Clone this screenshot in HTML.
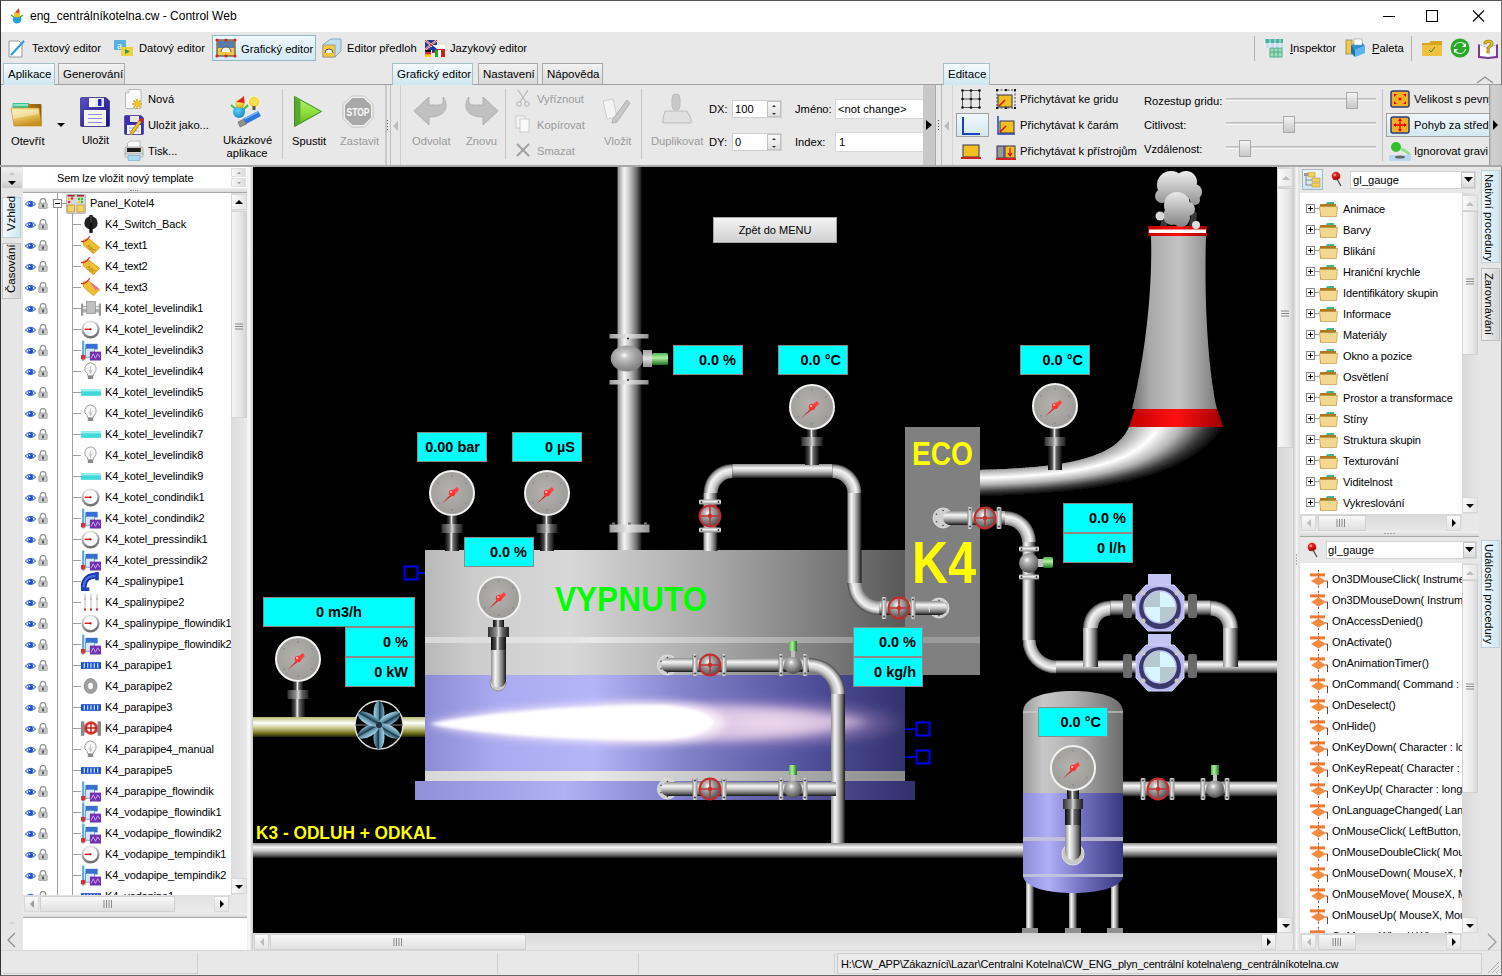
<!DOCTYPE html>
<html><head><meta charset="utf-8">
<style>
*{margin:0;padding:0;box-sizing:border-box}
html,body{width:1502px;height:976px;overflow:hidden;background:#e8e8e8;font-family:"Liberation Sans",sans-serif;font-size:11.2px;color:#000}
.a{position:absolute}
.t{position:absolute;white-space:nowrap;line-height:14px}
.g{color:#9a9a9a}
.tab{position:absolute;white-space:nowrap;border:1px solid #a8a8a8;border-bottom:none;background:linear-gradient(#f2f2f2,#d8d8d8);height:21px;line-height:21px;padding:0 4px;font-size:11.5px;overflow:hidden}
.tab.on{background:linear-gradient(#f4fbfd,#cfe7f0);border-color:#a8c0c8;height:22px}
.vs{position:absolute;background:linear-gradient(90deg,#e4e4e4,#f4f4f4 50%,#e0e0e0)}
.hs{position:absolute;background:linear-gradient(#e4e4e4,#f4f4f4 50%,#e0e0e0)}
.btn{position:absolute;background:linear-gradient(#fbfbfb,#e2e2e2);border:1px solid #bdbdbd}
.cy{position:absolute;background:#00ffff;border:1px solid #8c8c8c;font-weight:bold;font-size:14px;text-align:right;padding-right:6px;line-height:27px;color:#000;font-family:"Liberation Sans",sans-serif}
.n{font-size:11px;letter-spacing:-0.1px}
.row{position:absolute;height:21px;line-height:21px;white-space:nowrap}
</style></head><body>

<svg width="0" height="0" style="position:absolute">
<defs>
<symbol id="eye" viewBox="0 0 11 8"><ellipse cx="5.5" cy="4" rx="5.3" ry="3.3" fill="#dfe8f8"/><path d="M0.3 4 Q5.5 -1.5 10.7 4 Q5.5 9 0.3 4Z" fill="none" stroke="#2a50b8" stroke-width="0.9"/><circle cx="5.5" cy="4" r="2.5" fill="#2050c8"/><circle cx="4.6" cy="3.2" r="0.8" fill="#fff"/></symbol>
<symbol id="lock" viewBox="0 0 10 11"><path d="M2.2 5 V3.3 A2.8 2.8 0 0 1 7.8 3.3 V5" fill="none" stroke="#9a9a9a" stroke-width="1.3"/><rect x="0.8" y="5" width="8.4" height="5.6" rx="0.6" fill="#c8c8c8" stroke="#8a8a8a" stroke-width="0.6"/><rect x="4.3" y="6.4" width="1.4" height="3" fill="#333"/></symbol>
<symbol id="i_switch" viewBox="0 0 14 18"><circle cx="7" cy="8" r="6" fill="#222"/><path d="M5.5 1 L8.5 1 L8.5 17 L5.5 17Z" fill="#111"/><path d="M7 2 V8" stroke="#aa8" stroke-width="0.5"/></symbol>
<symbol id="i_tag" viewBox="0 0 16 16"><path d="M6 3 L15 10 L10 15 L2 8 L2 4Z" fill="#f0c030" stroke="#d09010" stroke-width="0.6"/><path d="M0 5 C3 6 5 4 7 1" stroke="#e02020" fill="none" stroke-width="1"/><text x="5" y="11" font-size="4" fill="#a07010" transform="rotate(40 7 9)" font-family="Liberation Sans">ABC</text></symbol>
<symbol id="i_tag3" viewBox="0 0 16 16"><path d="M6 3 L15 10 L10 15 L2 8 L2 4Z" fill="#f0c030" stroke="#d09010" stroke-width="0.6"/><path d="M7 4 L14 9 L12 11Z" fill="#e070a0"/><path d="M0 5 C3 6 5 4 7 1" stroke="#e02020" fill="none" stroke-width="1"/></symbol>
<symbol id="i_meter" viewBox="0 0 18 14"><rect x="0" y="5" width="18" height="6" fill="#b0b0b0"/><rect x="0" y="6" width="18" height="2" fill="#e8e8e8"/><rect x="5" y="1" width="8" height="11" fill="#c0c0c0" stroke="#888" stroke-width="0.6"/><rect x="0" y="3" width="2" height="11" fill="#999"/><rect x="16" y="3" width="2" height="11" fill="#999"/></symbol>
<symbol id="i_gauge" viewBox="0 0 18 18"><defs><linearGradient id="gic" x1="0" y1="0" x2="0.3" y2="1"><stop offset="0" stop-color="#f8f8f8"/><stop offset="1" stop-color="#707070"/></linearGradient></defs><circle cx="9" cy="9" r="8.6" fill="url(#gic)"/><circle cx="9" cy="8.6" r="6.6" fill="#fbfbfb"/><path d="M3.5 8.8 H9" stroke="#e02020" stroke-width="1.3"/><circle cx="9" cy="8.8" r="1.1" fill="#c01010"/></symbol>
<symbol id="i_disp" viewBox="0 0 18 18"><rect x="1" y="0" width="2" height="18" fill="#60a8e0"/><rect x="0" y="13" width="4" height="4" fill="#e03030"/><rect x="4" y="3" width="11" height="5" fill="#3870d0"/><rect x="4" y="7" width="8" height="8" fill="#d8e8f8" stroke="#3a78c8" stroke-width="0.6"/><rect x="8" y="10" width="10" height="8" fill="#7030b0"/><path d="M9 16 L11 12 L13 16 L15 12 L17 15" stroke="#d8b0f8" fill="none" stroke-width="0.8"/></symbol>
<symbol id="i_bulb" viewBox="0 0 14 18"><path d="M7 1 A5.5 5.5 0 0 1 10 11 L9.5 13 L4.5 13 L4 11 A5.5 5.5 0 0 1 7 1Z" fill="#f8f8f8" stroke="#888" stroke-width="0.7"/><rect x="4.5" y="13" width="5" height="3" fill="#888"/><path d="M7 4 V11 M5.5 7 L7 11 L8.5 7" stroke="#aaa" stroke-width="0.5" fill="none"/></symbol>
<symbol id="i_cyan" viewBox="0 0 18 8"><rect x="0" y="1" width="18" height="6" fill="#40d8d8"/><rect x="0" y="1" width="18" height="2" fill="#a0f0f0"/></symbol>
<symbol id="i_bend" viewBox="0 0 16 16"><path d="M2 15 C2 6 6 3 14 3" stroke="#1830b0" stroke-width="5" fill="none"/><path d="M2 15 C2 6 6 3 14 3" stroke="#4a70e0" stroke-width="2" fill="none"/><rect x="12" y="0" width="3" height="7" fill="#2040c0"/><rect x="0" y="13" width="7" height="3" fill="#2040c0"/></symbol>
<symbol id="i_pipes" viewBox="0 0 18 18"><path d="M3 1 V17 M9 1 V17 M15 1 V17" stroke="#ddd" stroke-width="2"/><path d="M3 15 V17 M9 15 V17 M15 15 V17" stroke="#e02020" stroke-width="2"/><path d="M3 5 V6 M9 5 V6 M15 5 V6" stroke="#e02020" stroke-width="1"/></symbol>
<symbol id="i_bar" viewBox="0 0 18 8"><rect x="0" y="1" width="18" height="6" fill="#1a50d0"/><path d="M3 2 V6 M6 2 V6 M9 2 V6 M12 2 V6 M15 2 V6" stroke="#c8e0ff" stroke-width="1.2"/></symbol>
<symbol id="i_disc" viewBox="0 0 16 18"><ellipse cx="8" cy="9" rx="7" ry="8" fill="#a0a0a0" stroke="#777" stroke-width="0.6"/><ellipse cx="8" cy="9" rx="2.5" ry="3.5" fill="#fff"/></symbol>
<symbol id="i_valve" viewBox="0 0 18 16"><rect x="0" y="5" width="18" height="7" fill="#999"/><rect x="0" y="2" width="3" height="13" fill="#888"/><rect x="15" y="2" width="3" height="13" fill="#888"/><circle cx="9" cy="8" r="6" fill="#e03030"/><circle cx="9" cy="8" r="3.5" fill="#eee"/><path d="M9 3 V13 M4 8 H14" stroke="#c02020" stroke-width="1.2"/></symbol>
<symbol id="i_panel" viewBox="0 0 20 20"><rect x="0.5" y="0.5" width="19" height="19" rx="1" fill="#d8d8d8" stroke="#999" stroke-width="0.6"/><rect x="1.5" y="1" width="7" height="1.5" fill="#a02020"/><rect x="11" y="1" width="7" height="1.5" fill="#a02020"/><circle cx="3" cy="5" r="1.2" fill="#e8d020"/><circle cx="6" cy="4.5" r="1.2" fill="#e02020"/><circle cx="3" cy="8" r="1.2" fill="#e02020"/><circle cx="13" cy="5" r="1.2" fill="#30c030"/><circle cx="16" cy="5" r="1.2" fill="#30c030"/><circle cx="16" cy="8" r="1.2" fill="#30c030"/><circle cx="13" cy="8" r="1.2" fill="#e8d020"/><rect x="1.5" y="11" width="7" height="7" fill="#f0d860" stroke="#c08030" stroke-width="0.6"/><rect x="11" y="11" width="7" height="7" fill="#f0d860" stroke="#c08030" stroke-width="0.6"/></symbol>
<symbol id="folder" viewBox="0 0 20 16"><path d="M1 3 L7 3 L8 1 L15 1 L15 4 L1 4Z" fill="#40b888"/><path d="M1 3 H17 V15 H1Z" fill="#b07820"/><path d="M0.5 5.5 H18.5 L17.5 15.5 H1.5Z" fill="#f2d890" stroke="#b88a30" stroke-width="0.6"/></symbol>
<symbol id="evt" viewBox="0 0 18 18"><path d="M8.5 0 V18" stroke="#6a2a10" stroke-width="0.9" stroke-dasharray="1.6 1.1"/><rect x="0" y="3.4" width="15" height="3" fill="#f07830"/><path d="M8.5 6.5 L16 11 L8.5 15.5 L1 11Z" fill="#f88a40"/><path d="M15.5 11 H17.5 V18" stroke="#6a2a10" stroke-width="0.9" fill="none"/></symbol>
<symbol id="pin" viewBox="0 0 12 16"><circle cx="5" cy="5" r="4.3" fill="#e02020"/><circle cx="3.8" cy="3.8" r="1.4" fill="#ff9090"/><path d="M6 8 L10 15" stroke="#444" stroke-width="1.2"/><path d="M2 8 L9 6" stroke="#b01010" stroke-width="2"/></symbol>
</defs></svg>
<!-- TITLE BAR -->
<div class="a" style="left:0;top:0;width:1502px;height:32px;background:#fff;border-left:1px solid #333;border-top:1px solid #555;border-right:1px solid #777"></div>

<svg class="a" style="left:10px;top:7px" width="14" height="17" viewBox="0 0 14 17"><path d="M1 8 L5 11 M13 8 L9 11" stroke="#40b030" stroke-width="1.4"/><ellipse cx="7" cy="12.5" rx="4.3" ry="4" fill="#28a0e0"/><circle cx="7" cy="7.5" r="3" fill="#f0c020"/><path d="M5 5.5 L9 1 L9.5 6Z" fill="#e83030"/></svg>
<div class="t" style="left:30px;top:9px;font-size:12px">eng_centrálníkotelna.cw - Control Web</div>
<svg class="a" style="left:1383px;top:9px" width="110" height="14" viewBox="0 0 110 14"><path d="M0 7.5H12" stroke="#000" stroke-width="1"/><rect x="43.5" y="1.5" width="11" height="11" fill="none" stroke="#000"/><path d="M90 1.5L101 12.5M101 1.5L90 12.5" stroke="#000" stroke-width="1.1"/></svg>

<!-- TOOLBAR -->

<div class="a" style="left:0;top:32px;width:1502px;height:944px;border-left:1px solid #333;border-right:1px solid #777;border-bottom:1px solid #666"></div>
<!-- Textovy editor -->
<svg class="a" style="left:7px;top:38px" width="20" height="20" viewBox="0 0 20 20"><path d="M2 3 L12 3 L15 6 L15 19 L2 19Z" fill="#fafafa" stroke="#999" stroke-width="1"/><path d="M4 17 L17 3" stroke="#2d9ad8" stroke-width="2"/></svg>
<div class="t" style="left:32px;top:41px">Textový editor</div>
<svg class="a" style="left:113px;top:38px" width="22" height="20" viewBox="0 0 22 20"><rect x="1" y="2" width="12" height="10" fill="#5ab0e0"/><text x="4" y="11" font-size="9" fill="#fff" font-family="Liberation Sans">a</text><rect x="8" y="9" width="12" height="9" fill="#f0d040"/><path d="M12 11 L17 13.5 L12 16Z" fill="#2a9a50"/></svg>
<div class="t" style="left:139px;top:41px">Datový editor</div>
<div class="a" style="left:212px;top:35px;width:104px;height:26px;background:linear-gradient(#eef8fc,#d5eaf3);border:1px solid #95b7c5"></div>
<svg class="a" style="left:215px;top:38px" width="22" height="20" viewBox="0 0 22 20"><rect x="2" y="2" width="18" height="16" fill="#f5c842" stroke="#333" stroke-width="1"/><rect x="3" y="3" width="16" height="7" fill="#5a7aa8"/><path d="M6 14 A5 5 0 0 1 16 14" fill="#fff" stroke="#555"/><circle cx="2" cy="2" r="1.6" fill="#e02020"/><circle cx="20" cy="2" r="1.6" fill="#e02020"/><circle cx="2" cy="18" r="1.6" fill="#e02020"/><circle cx="20" cy="18" r="1.6" fill="#e02020"/><circle cx="11" cy="2" r="1.6" fill="#e02020"/><circle cx="11" cy="18" r="1.6" fill="#e02020"/></svg>
<div class="t" style="left:241px;top:42px">Grafický editor</div>
<svg class="a" style="left:321px;top:37px" width="22" height="22" viewBox="0 0 22 22"><path d="M4 6 L10 2 L20 2 L20 14 L14 20 L2 20 L2 8Z" fill="#bfe0f0" stroke="#8ab" stroke-width="1"/><rect x="2" y="8" width="12" height="12" fill="#f5c842" stroke="#a98"/><path d="M4 16 A4 4 0 0 1 12 16" fill="#fff" stroke="#555"/></svg>
<div class="t" style="left:347px;top:41px">Editor předloh</div>
<svg class="a" style="left:424px;top:39px" width="22" height="18" viewBox="0 0 22 18"><rect x="1" y="1" width="12" height="10" fill="#2a3a8a"/><path d="M1 1L13 11M13 1L1 11" stroke="#fff" stroke-width="2"/><path d="M1 1L13 11M13 1L1 11" stroke="#d22" stroke-width="1"/><rect x="1" y="11" width="6" height="2.3" fill="#000"/><rect x="1" y="13.3" width="6" height="2.3" fill="#d22"/><rect x="1" y="15.6" width="6" height="2.3" fill="#fc0"/><rect x="8" y="6" width="13" height="4" fill="#fff"/><rect x="8" y="10" width="13" height="4" fill="#d22"/><path d="M8 6 L13 10 L8 14Z" fill="#13a"/><rect x="14" y="11" width="3" height="7" fill="#fff"/><rect x="17" y="11" width="4" height="7" fill="#c22"/><rect x="11" y="11" width="3" height="7" fill="#2a2"/></svg>
<div class="t" style="left:450px;top:41px">Jazykový editor</div>
<div class="a" style="left:1254px;top:36px;width:1px;height:25px;background:#b0b0b0"></div>
<svg class="a" style="left:1264px;top:38px" width="20" height="20" viewBox="0 0 20 20"><rect x="1" y="1" width="18" height="4" fill="#4ab0a0"/><rect x="1" y="5" width="18" height="5" fill="#cde"/><rect x="6" y="10" width="12" height="9" fill="#9de0b0" stroke="#5a9" stroke-width="1"/><path d="M6 14H18M10 10V19M14 10V19" stroke="#5a9"/><path d="M1 1V10M6 1V10M11 1V10M16 1V10" stroke="#fff" stroke-width="0.7"/></svg>
<div class="t" style="left:1290px;top:41px"><u>I</u>nspektor</div>
<svg class="a" style="left:1345px;top:37px" width="22" height="22" viewBox="0 0 22 22"><rect x="1" y="3" width="6" height="14" fill="#f5c842" stroke="#886" stroke-width="0.8"/><path d="M6 8 L16 4 L20 9 L10 13Z" fill="#2f8fd0"/><path d="M6 8 L10 13 L10 20 L6 16Z" fill="#1a70b0"/><path d="M10 13 L20 9 L20 16 L10 20Z" fill="#5ab5e8"/><rect x="9" y="2" width="8" height="6" fill="#fff" stroke="#999" stroke-width="0.6"/></svg>
<div class="t" style="left:1372px;top:41px"><u>P</u>aleta</div>
<div class="a" style="left:1411px;top:36px;width:1px;height:25px;background:#b0b0b0"></div>
<svg class="a" style="left:1421px;top:38px" width="22" height="20" viewBox="0 0 22 20"><path d="M1 5 L8 5 L10 3 L21 3 L21 18 L1 18Z" fill="#d9a520"/><rect x="1" y="7" width="20" height="11" fill="#f0c040"/><path d="M8 12 L10 14 L14 9" stroke="#2a8a30" stroke-width="1" fill="none"/></svg>
<svg class="a" style="left:1450px;top:38px" width="20" height="20" viewBox="0 0 20 20"><circle cx="10" cy="10" r="9.5" fill="#29a829"/><path d="M5 9 A5 5 0 0 1 14 7 L12 9 L16 9 L16 5 L15 6 A6.5 6.5 0 0 0 4 9Z M15 11 A5 5 0 0 1 6 13 L8 11 L4 11 L4 15 L5 14 A6.5 6.5 0 0 0 16 11Z" fill="#fff"/></svg>
<svg class="a" style="left:1477px;top:36px" width="22" height="24" viewBox="0 0 22 24"><path d="M1 8 L11 12 L21 8 L21 22 L11 23 L1 22Z" fill="#7a3a98"/><path d="M3 9 L11 12 L11 21 L3 20Z" fill="#fff"/><path d="M11 12 L19 9 L19 20 L11 21Z" fill="#f4f4f4"/><text x="6" y="17" font-size="18" font-weight="bold" fill="#f0c010" stroke="#8a6a00" stroke-width="0.6" font-family="Liberation Sans">?</text></svg>

<!-- RIBBON -->

<!-- tabs -->
<div class="a" style="left:1px;top:84px;width:1500px;height:1px;background:#a0a0a0"></div>
<div class="tab on" style="left:3px;top:63px;width:52px">Aplikace</div>
<div class="tab" style="left:58px;top:63px;width:67px">Generování</div>
<div class="tab on" style="left:392px;top:63px;width:81px">Grafický editor</div>
<div class="tab" style="left:478px;top:63px;width:60px">Nastavení</div>
<div class="tab" style="left:542px;top:63px;width:61px">Nápověda</div>
<div class="tab on" style="left:943px;top:63px;width:47px">Editace</div>
<svg class="a" style="left:1476px;top:76px" width="18" height="8" viewBox="0 0 18 8"><path d="M1 7 L9 1 L17 7" stroke="#909090" fill="none" stroke-width="1.2"/></svg>
<!-- ribbon separators -->
<div class="a" style="left:385px;top:85px;width:2px;height:80px;background:#c8c8c8"></div>
<div class="a" style="left:390px;top:85px;width:1px;height:80px;background:#bdbdbd"></div>
<div class="a" style="left:400px;top:85px;width:1px;height:80px;background:#d0d0d0"></div>
<div class="a" style="left:282px;top:89px;width:1px;height:70px;background:#c4c4c4"></div>
<div class="a" style="left:505px;top:89px;width:1px;height:70px;background:#c4c4c4"></div>
<div class="a" style="left:641px;top:89px;width:1px;height:70px;background:#c4c4c4"></div>
<div class="a" style="left:923px;top:85px;width:12px;height:80px;background:#c8c8c8"></div>
<div class="a" style="left:935px;top:85px;width:1px;height:80px;background:#a8a8a8"></div>
<div class="a" style="left:941px;top:85px;width:1px;height:80px;background:#b8b8b8"></div>
<div class="a" style="left:952px;top:85px;width:1px;height:80px;background:#d4d4d4"></div>
<svg class="a" style="left:925px;top:120px" width="8" height="10"><path d="M1 0 L7 5 L1 10Z" fill="#000"/></svg>
<svg class="a" style="left:393px;top:121px" width="6" height="10"><path d="M5 0 L0 5 L5 10Z" fill="#bbb"/></svg>
<svg class="a" style="left:386px;top:119px" width="3" height="14"><path d="M1 1.5H2M1 4.5H2M1 7.5H2M1 10.5H2" stroke="#555"/></svg>
<svg class="a" style="left:937px;top:119px" width="3" height="14"><path d="M1 1.5H2M1 4.5H2M1 7.5H2M1 10.5H2" stroke="#555"/></svg>
<svg class="a" style="left:944px;top:121px" width="6" height="10"><path d="M5 0 L0 5 L5 10Z" fill="#bbb"/></svg>
<div class="a" style="left:0;top:165px;width:1502px;height:2px;background:#a8a8a8"></div>

<!-- Otevrit -->
<svg class="a" style="left:10px;top:102px" width="33" height="26" viewBox="0 0 33 26"><defs><linearGradient id="fldF" x1="0" y1="0" x2="0.4" y2="1"><stop offset="0" stop-color="#fbeeb0"/><stop offset="0.45" stop-color="#f0d070"/><stop offset="1" stop-color="#c89020"/></linearGradient><linearGradient id="fldB" x1="0" y1="0" x2="1" y2="0"><stop offset="0" stop-color="#b07818"/><stop offset="1" stop-color="#8a5a10"/></linearGradient></defs><rect x="2.5" y="1" width="17" height="6" rx="1" fill="#3cc090"/><rect x="3.5" y="2" width="15" height="2" fill="#8ee0c0"/><rect x="18" y="2" width="13.5" height="22" rx="1" fill="url(#fldB)"/><path d="M1 6 L29 6 L31.5 24 L4 24Z" fill="url(#fldF)" stroke="#c08a20" stroke-width="0.6"/><path d="M2 8 L28 8 L29 12 L3 17Z" fill="#fff" opacity="0.35"/></svg>
<svg class="a" style="left:57px;top:123px" width="8" height="5"><path d="M0 0 L8 0 L4 4Z" fill="#000"/></svg>
<div class="t" style="left:11px;top:134px">Otevřít</div>
<svg class="a" style="left:80px;top:97px" width="30" height="30" viewBox="0 0 30 30"><defs><linearGradient id="flp" x1="0" y1="0" x2="1" y2="1"><stop offset="0" stop-color="#5a50c8"/><stop offset="0.5" stop-color="#3a30a8"/><stop offset="1" stop-color="#14108a"/></linearGradient></defs><path d="M0.5 1.5 Q0.5 0.5 1.5 0.5 L26 0.5 L29.5 4 L29.5 28.5 Q29.5 29.5 28.5 29.5 L1.5 29.5 Q0.5 29.5 0.5 28.5Z" fill="url(#flp)" stroke="#201870" stroke-width="0.6"/><rect x="9" y="1" width="15" height="9" fill="#e8e8e8"/><rect x="9" y="1" width="6" height="9" fill="#f8f8f8"/><rect x="18" y="2" width="3.5" height="7" rx="1" fill="#2020d0"/><rect x="4" y="13" width="22" height="16" fill="#f4f4f4"/><path d="M8 17.5H22M8 21.5H22M8 25.5H22" stroke="#9090e0" stroke-width="1"/></svg>
<div class="t n" style="left:82px;top:133px">Uložit</div>
<svg class="a" style="left:124px;top:88px" width="20" height="22" viewBox="0 0 20 22"><path d="M5 1.5 L16 1.5 Q17 1.5 17 2.5 L17 19.5 Q17 20.5 16 20.5 L2.5 20.5 Q1.5 20.5 1.5 19.5 L1.5 5Z" fill="#fafafa" stroke="#a8a8a8" stroke-width="0.8"/><path d="M1.5 5 L5 5 L5 1.5" fill="#e8e8e8" stroke="#a8a8a8" stroke-width="0.6"/><g stroke="#d8a800" stroke-width="1.4"><path d="M13 11 V21 M8 16 H18 M9.5 12.5 L16.5 19.5 M16.5 12.5 L9.5 19.5"/></g><circle cx="13" cy="16" r="2" fill="#f8d020"/></svg>
<div class="t" style="left:148px;top:92px">Nová</div>
<svg class="a" style="left:124px;top:115px" width="20" height="20" viewBox="0 0 20 20"><path d="M0.5 1.5 Q0.5 0.5 1.5 0.5 L17 0.5 L19.5 3 L19.5 18.5 Q19.5 19.5 18.5 19.5 L1.5 19.5 Q0.5 19.5 0.5 18.5Z" fill="#3a30b0" stroke="#201870" stroke-width="0.5"/><rect x="6" y="1" width="9" height="6" fill="#e8e8e8"/><rect x="3" y="10" width="14" height="9" fill="#f4f4f4"/><path d="M5 13H15M5 16H15" stroke="#9090e0" stroke-width="0.8"/><path d="M7 19 L17 5" stroke="#a07000" stroke-width="3.6"/><path d="M7 19 L17 5" stroke="#f0c020" stroke-width="2.4"/><path d="M16 6.4 L18 3.6" stroke="#e02020" stroke-width="3"/><path d="M6.5 19.5 L7.8 17.5" stroke="#d0a080" stroke-width="1.5"/></svg>
<div class="t" style="left:148px;top:118px">Uložit jako...</div>
<svg class="a" style="left:124px;top:140px" width="20" height="21" viewBox="0 0 20 21"><path d="M6 1 L16 1 L16 8 L3.5 8 L3.5 3.5Z" fill="#f8f8f8" stroke="#999" stroke-width="0.6"/><rect x="1" y="7" width="18" height="8" rx="1.5" fill="#d8d8d8" stroke="#888" stroke-width="0.6"/><rect x="3" y="8" width="14" height="4" fill="#1a1a1a"/><circle cx="16.5" cy="9" r="0.6" fill="#e03030"/><circle cx="16.5" cy="11" r="0.6" fill="#30c030"/><rect x="1" y="14" width="18" height="3" fill="#e8e8e8" stroke="#888" stroke-width="0.5"/><rect x="4" y="15.5" width="12" height="5" fill="#a8dcf0" stroke="#5aa0c0" stroke-width="0.5"/></svg>
<div class="t" style="left:148px;top:144px">Tisk...</div>
<svg class="a" style="left:229px;top:94px" width="34" height="34" viewBox="0 0 34 34"><defs><radialGradient id="ukB" cx="0.4" cy="0.35" r="0.7"><stop offset="0" stop-color="#60d0f8"/><stop offset="1" stop-color="#1888c8"/></radialGradient><radialGradient id="ukY" cx="0.4" cy="0.35" r="0.7"><stop offset="0" stop-color="#fff080"/><stop offset="1" stop-color="#d8a800"/></radialGradient></defs><path d="M2 11 L8 16 M19 11 L14 16" stroke="#40c030" stroke-width="2"/><circle cx="10" cy="18" r="6" fill="url(#ukB)"/><circle cx="11" cy="9.5" r="4.5" fill="url(#ukY)"/><path d="M7.5 8 L15 2 L15.5 9Z" fill="#e82020"/><circle cx="25" cy="8" r="6.5" fill="#fff8a0" opacity="0.6"/><circle cx="25" cy="8" r="4.5" fill="#f8e050" stroke="#e0b000" stroke-width="0.6"/><rect x="23.5" y="12" width="3" height="4" fill="#555"/><path d="M14 25 L29 17 L32 22 L17 30Z" fill="#2878e0"/><path d="M15 24 L28 17.5 L29 19 L16 25.5Z" fill="#70b0f8"/><path d="M9 28 L15 25 L17.5 30 L11 33Z" fill="#909090" stroke="#555" stroke-width="0.5"/></svg>
<div class="t" style="left:223px;top:134px;text-align:center;width:48px;line-height:13px">Ukázkové<br>aplikace</div>
<svg class="a" style="left:293px;top:95px" width="30" height="33" viewBox="0 0 30 33"><defs><linearGradient id="spG" x1="0" y1="0" x2="0" y2="1"><stop offset="0" stop-color="#b8f080"/><stop offset="0.5" stop-color="#90e040"/><stop offset="1" stop-color="#60b020"/></linearGradient></defs><path d="M1.5 1.5 L28.5 16.5 L1.5 31.5Z" fill="url(#spG)" stroke="#3a8a20" stroke-width="1"/><path d="M2 2.5 L7.5 5.5 L7.5 28 L2 31Z" fill="#5aa830"/></svg>
<div class="t" style="left:292px;top:134px">Spustit</div>
<svg class="a" style="left:342px;top:95px" width="32" height="33" viewBox="0 0 32 33"><path d="M9.5 1 L22.5 1 L31 9.5 L31 23.5 L22.5 32 L9.5 32 L1 23.5 L1 9.5Z" fill="#f0f0f0" stroke="#b8b8b8" stroke-width="0.8"/><path d="M10.3 3 L21.7 3 L29 10.3 L29 22.7 L21.7 30 L10.3 30 L3 22.7 L3 10.3Z" fill="#a8a8a8"/><text x="16" y="21" text-anchor="middle" font-size="11" font-weight="bold" fill="#fafafa" font-family="Liberation Sans" textLength="23" lengthAdjust="spacingAndGlyphs">STOP</text></svg>
<div class="t g" style="left:340px;top:134px">Zastavit</div>

<!-- Odvolat etc -->
<svg class="a" style="left:413px;top:95px" width="36" height="32" viewBox="0 0 36 32"><path d="M1 16 L16 2 L16 10 C26 10 32 12 30 2 C36 10 34 22 16 22 L16 30Z" fill="#c0c0c0" stroke="#b0b0b0"/></svg>
<div class="t g" style="left:412px;top:134px">Odvolat</div>
<svg class="a" style="left:463px;top:95px" width="36" height="32" viewBox="0 0 36 32"><path d="M35 16 L20 2 L20 10 C10 10 4 12 6 2 C0 10 2 22 20 22 L20 30Z" fill="#c0c0c0" stroke="#b0b0b0"/></svg>
<div class="t g" style="left:466px;top:134px">Znovu</div>
<svg class="a" style="left:515px;top:89px" width="16" height="18" viewBox="0 0 16 18"><path d="M3 1 L11 13 M13 1 L5 13" stroke="#b8b8b8" stroke-width="1.2"/><circle cx="4" cy="15" r="2.3" fill="none" stroke="#b0b0b0"/><circle cx="12" cy="15" r="2.3" fill="none" stroke="#b0b0b0"/></svg>
<div class="t g" style="left:537px;top:92px">Vyříznout</div>
<svg class="a" style="left:515px;top:115px" width="16" height="18" viewBox="0 0 16 18"><rect x="1" y="1" width="9" height="12" fill="#f4f4f4" stroke="#ccc"/><rect x="5" y="4" width="9" height="13" fill="#fafafa" stroke="#ccc"/></svg>
<div class="t g" style="left:537px;top:118px">Kopírovat</div>
<svg class="a" style="left:515px;top:142px" width="16" height="16" viewBox="0 0 16 16"><path d="M2 2 L14 14 M14 2 L2 14" stroke="#a0a0a0" stroke-width="2"/></svg>
<div class="t g" style="left:537px;top:144px">Smazat</div>
<svg class="a" style="left:601px;top:97px" width="30" height="28" viewBox="0 0 30 28"><path d="M2 4 L12 2 L16 20 L6 22Z" fill="#f4f4f4" stroke="#ccc"/><path d="M12 22 L26 3 L29 6 L16 25 L11 26Z" fill="#c8c8c8" stroke="#b0b0b0"/></svg>
<div class="t g" style="left:604px;top:134px">Vložit</div>
<svg class="a" style="left:659px;top:93px" width="36" height="34" viewBox="0 0 36 34"><rect x="13" y="1" width="8" height="16" rx="4" fill="#c8c8c8" stroke="#bbb"/><path d="M6 18 L28 18 L32 26 L32 30 L4 30 L4 26Z" fill="#e0e0e0" stroke="#bbb"/></svg>
<div class="t g" style="left:651px;top:134px">Duplikovat</div>
<div class="t" style="left:709px;top:102px">DX:</div>
<div class="a" style="left:732px;top:100px;width:50px;height:18px;background:#fff;border:1px solid #d0d0d0"></div>
<div class="t" style="left:735px;top:102px">100</div>
<div class="a" style="left:767px;top:101px;width:14px;height:16px;background:linear-gradient(#f8f8f8,#e0e0e0);border:1px solid #c0c0c0"></div>
<div class="t" style="left:709px;top:135px">DY:</div>
<div class="a" style="left:732px;top:133px;width:50px;height:18px;background:#fff;border:1px solid #d0d0d0"></div>
<div class="t" style="left:735px;top:135px">0</div>
<div class="a" style="left:767px;top:134px;width:14px;height:16px;background:linear-gradient(#f8f8f8,#e0e0e0);border:1px solid #c0c0c0"></div>
<svg class="a" style="left:769px;top:103px" width="10" height="46"><path d="M3 4 L5 2 L7 4Z M3 10 L5 12 L7 10Z M3 37 L5 35 L7 37Z M3 43 L5 45 L7 43Z" fill="#333"/></svg>
<div class="t" style="left:795px;top:102px">Jméno:</div>
<div class="a" style="left:835px;top:99px;width:88px;height:20px;background:#fff;border:1px solid #d8d8d8;border-right:none"></div>
<div class="t" style="left:838px;top:102px">&lt;not change&gt;</div>
<div class="t" style="left:795px;top:135px">Index:</div>
<div class="a" style="left:835px;top:132px;width:88px;height:20px;background:#fff;border:1px solid #d8d8d8;border-right:none"></div>
<div class="t" style="left:839px;top:135px">1</div>

<!-- Editace -->
<svg class="a" style="left:961px;top:89px" width="20" height="20" viewBox="0 0 20 20"><path d="M1.5 1.5H18.5M1.5 10H18.5M1.5 18.5H18.5M1.5 1.5V18.5M10 1.5V18.5M18.5 1.5V18.5" stroke="#555" stroke-width="1"/><g fill="#111"><circle cx="1.5" cy="1.5" r="1.3"/><circle cx="10" cy="1.5" r="1.3"/><circle cx="18.5" cy="1.5" r="1.3"/><circle cx="1.5" cy="10" r="1.3"/><circle cx="10" cy="10" r="1.3"/><circle cx="18.5" cy="10" r="1.3"/><circle cx="1.5" cy="18.5" r="1.3"/><circle cx="10" cy="18.5" r="1.3"/><circle cx="18.5" cy="18.5" r="1.3"/></g></svg>
<div class="a" style="left:956px;top:113px;width:33px;height:24px;background:linear-gradient(#f0f8fc,#d4e8f0);border:1px solid #a0a0a0"></div>
<svg class="a" style="left:960px;top:116px" width="22" height="20" viewBox="0 0 22 20"><path d="M3 1 V18 H20" stroke="#2040c0" stroke-width="2" fill="none"/></svg>
<svg class="a" style="left:960px;top:144px" width="22" height="16" viewBox="0 0 22 16"><rect x="3" y="1" width="16" height="12" fill="#f0c020" stroke="#335"/><rect x="1" y="13" width="20" height="2" fill="#d02020"/></svg>
<svg class="a" style="left:996px;top:89px" width="20" height="20" viewBox="0 0 20 20"><path d="M1 1H19M1 19H19M1 1V19M19 1V19" stroke="#444" stroke-dasharray="2 1.5"/><g fill="#111"><circle cx="1" cy="1" r="1.2"/><circle cx="10" cy="1" r="1.2"/><circle cx="19" cy="1" r="1.2"/><circle cx="1" cy="19" r="1.2"/><circle cx="19" cy="19" r="1.2"/><circle cx="10" cy="19" r="1.2"/></g><rect x="2" y="6" width="14" height="12" fill="#f0c020" stroke="#335"/><path d="M3 17 L9 11" stroke="#e00" stroke-width="1.5"/></svg>
<svg class="a" style="left:996px;top:115px" width="20" height="20" viewBox="0 0 20 20"><path d="M2 1 V19 H19" stroke="#2040c0" stroke-width="1.5" fill="none"/><rect x="4" y="6" width="14" height="12" fill="#f0c020" stroke="#335"/><path d="M4 17 L10 11" stroke="#e00" stroke-width="1.5"/></svg>
<svg class="a" style="left:996px;top:143px" width="20" height="18" viewBox="0 0 20 18"><rect x="1" y="3" width="7" height="12" fill="#999" stroke="#335"/><rect x="9" y="3" width="10" height="12" fill="#f0c020" stroke="#335"/><path d="M14 5 V12 M12 10 L14 13 L16 10" stroke="#e00" stroke-width="1.2" fill="none"/><rect x="0" y="15" width="20" height="2" fill="#d02020"/></svg>
<div class="t" style="left:1020px;top:92px">Přichytávat ke gridu</div>
<div class="t" style="left:1020px;top:118px">Přichytávat k čarám</div>
<div class="t" style="left:1020px;top:144px">Přichytávat k přístrojům</div>
<div class="t" style="left:1144px;top:94px">Rozestup gridu:</div>
<div class="t" style="left:1144px;top:118px">Citlivost:</div>
<div class="t" style="left:1144px;top:142px">Vzdálenost:</div>
<div class="a" style="left:1226px;top:98px;width:150px;height:3px;background:#d0d0d0;border-top:1px solid #c0c0c0;border-bottom:1px solid #f8f8f8"></div>
<div class="a" style="left:1226px;top:122px;width:150px;height:3px;background:#d0d0d0;border-top:1px solid #c0c0c0;border-bottom:1px solid #f8f8f8"></div>
<div class="a" style="left:1226px;top:146px;width:150px;height:3px;background:#d0d0d0;border-top:1px solid #c0c0c0;border-bottom:1px solid #f8f8f8"></div>
<div class="a" style="left:1346px;top:92px;width:12px;height:17px;background:linear-gradient(#f4f4f4,#c8c8c8);border:1px solid #a8a8a8"></div>
<div class="a" style="left:1283px;top:116px;width:12px;height:17px;background:linear-gradient(#f4f4f4,#c8c8c8);border:1px solid #a8a8a8"></div>
<div class="a" style="left:1239px;top:140px;width:12px;height:17px;background:linear-gradient(#f4f4f4,#c8c8c8);border:1px solid #a8a8a8"></div>
<div class="a" style="left:1382px;top:89px;width:1px;height:72px;background:#c0c0c0"></div>
<div class="a" style="left:1386px;top:113px;width:103px;height:24px;background:linear-gradient(#f0f8fc,#d4e8f0);border:1px solid #a0a0a0;border-right:none"></div>
<svg class="a" style="left:1390px;top:90px" width="20" height="18" viewBox="0 0 20 18"><rect x="1" y="1" width="18" height="16" rx="2" fill="#f0b020" stroke="#2a3a7a" stroke-width="1.5"/><path d="M4 4 L7 4 L4 7Z M16 4 L13 4 L16 7Z M4 14 L7 14 L4 11Z M16 14 L13 14 L16 11Z" fill="#e00"/><circle cx="10" cy="9" r="1.5" fill="#e00"/></svg>
<svg class="a" style="left:1390px;top:116px" width="20" height="18" viewBox="0 0 20 18"><rect x="1" y="1" width="18" height="16" rx="2" fill="#f0b020" stroke="#2a3a7a" stroke-width="1.5"/><path d="M10 3 V15 M4 9 H16" stroke="#e00" stroke-width="1.3"/><path d="M10 2 L8 5 L12 5Z M10 16 L8 13 L12 13Z M3 9 L6 7 L6 11Z M17 9 L14 7 L14 11Z" fill="#e00"/></svg>
<svg class="a" style="left:1389px;top:141px" width="22" height="20" viewBox="0 0 22 20"><rect x="0" y="14" width="22" height="6" fill="#b8d8f0"/><ellipse cx="11" cy="16" rx="5" ry="1.5" fill="#666"/><circle cx="7" cy="6" r="5" fill="#30c030"/><path d="M12 8 C16 9 20 12 20 14" stroke="#90e090" stroke-width="3" fill="none"/></svg>
<div class="t" style="left:1414px;top:92px">Velikost s pevný</div>
<div class="t" style="left:1414px;top:118px">Pohyb za střed</div>
<div class="t" style="left:1414px;top:144px">Ignorovat gravi</div>
<div class="a" style="left:1489px;top:85px;width:13px;height:80px;background:linear-gradient(90deg,#bdbdbd,#d0d0d0 20%,#c8c8c8);border-left:1px solid #a0a0a0"></div>
<svg class="a" style="left:1492px;top:120px" width="8" height="10"><path d="M1 0 L6 5 L1 10Z" fill="#000"/></svg>

<!-- LEFT PANEL -->

<div class="a" style="left:1px;top:167px;width:21px;height:783px;background:#e6e6e6"></div>
<div class="a" style="left:2px;top:168px;width:20px;height:10px;background:linear-gradient(#f0f0f0,#e0e0e0)"></div>
<div class="a" style="left:2px;top:178px;width:20px;height:10px;background:linear-gradient(#e8e8e8,#c8c8c8)"></div>
<svg class="a" style="left:6px;top:170px" width="12" height="16"><path d="M3 5 L6 2 L9 5Z" fill="#c8c8c8"/><path d="M2 11 L10 11 L6 15Z" fill="#000"/></svg>
<div class="a" style="left:2px;top:197px;width:19px;height:41px;background:linear-gradient(90deg,#f4fbfe,#cfe6ef);border:1px solid #c0d0d8"></div>
<div class="t" style="left:4px;top:231px;transform:rotate(-90deg);transform-origin:0 0;font-size:11.5px;line-height:14px">Vzhled</div>
<div class="a" style="left:2px;top:243px;width:19px;height:56px;background:linear-gradient(90deg,#f0f0f0,#d4d4d4);border:1px solid #c0c0c0"></div>
<div class="t" style="left:4px;top:293px;transform:rotate(-90deg);transform-origin:0 0;font-size:11.5px;line-height:14px">Časování</div>
<svg class="a" style="left:6px;top:932px" width="12" height="16"><path d="M9 1 L2 8 L9 15" stroke="#8a8a8a" fill="none" stroke-width="1.2"/></svg>
<svg class="a" style="left:8px;top:920px" width="8" height="5"><path d="M1 4 L4 1 L7 4Z" fill="#d0d0d0"/></svg>
<!-- template -->
<div class="a" style="left:23px;top:167px;width:224px;height:21px;background:#fff"></div>
<div class="t n" style="left:57px;top:171px">Sem lze vložit nový template</div>
<div class="a" style="left:231px;top:168px;width:15px;height:9px;background:linear-gradient(90deg,#f8f8f8,#dcdcdc);border:1px solid #e0e0e0"></div>
<div class="a" style="left:231px;top:178px;width:15px;height:9px;background:linear-gradient(90deg,#f8f8f8,#dcdcdc);border:1px solid #e0e0e0"></div>
<svg class="a" style="left:234px;top:169px" width="10" height="18"><path d="M3 5 L5 3 L7 5Z M3 13 L5 15 L7 13Z" fill="#999"/></svg>
<div class="a" style="left:23px;top:188px;width:224px;height:5px;background:linear-gradient(#f0f0f0,#d8d8d8);border-bottom:1px solid #a8a8a8"></div>
<div class="a" style="left:130px;top:190px;width:8px;height:1px;border-top:1px dotted #888"></div>
<!-- tree -->
<div class="a" style="left:23px;top:193px;width:208px;height:702px;background:#fff;overflow:hidden">
<div class="a" style="left:34px;top:0;width:1px;height:702px;background:#a0a0a0"></div>
<div class="a" style="left:49px;top:19px;width:1px;height:685px;background:#a0a0a0"></div>
<svg class="a" style="left:2px;top:7px" width="11" height="8"><use href="#eye"/></svg><svg class="a" style="left:15px;top:5px" width="10" height="11"><use href="#lock"/></svg><div class="a" style="left:30px;top:6px;width:9px;height:9px;background:#fff;border:1px solid #888"></div><div class="a" style="left:32px;top:10px;width:5px;height:1px;background:#000"></div><div class="a" style="left:39px;top:10px;width:4px;height:1px;background:#a0a0a0"></div><svg class="a" style="left:43px;top:1px" width="20" height="20"><use href="#i_panel"/></svg><div class="t n" style="left:67px;top:3px">Panel_Kotel4</div><svg class="a" style="left:2px;top:28px" width="11" height="8"><use href="#eye"/></svg><svg class="a" style="left:15px;top:26px" width="10" height="11"><use href="#lock"/></svg><div class="a" style="left:50px;top:31px;width:8px;height:1px;background:#a0a0a0"></div><svg class="a" style="left:60px;top:21px" width="16" height="20"><use href="#i_switch"/></svg><div class="t n" style="left:82px;top:24px">K4_Switch_Back</div><svg class="a" style="left:2px;top:49px" width="11" height="8"><use href="#eye"/></svg><svg class="a" style="left:15px;top:47px" width="10" height="11"><use href="#lock"/></svg><div class="a" style="left:50px;top:52px;width:8px;height:1px;background:#a0a0a0"></div><svg class="a" style="left:58px;top:42px" width="20" height="20"><use href="#i_tag"/></svg><div class="t n" style="left:82px;top:45px">K4_text1</div><svg class="a" style="left:2px;top:70px" width="11" height="8"><use href="#eye"/></svg><svg class="a" style="left:15px;top:68px" width="10" height="11"><use href="#lock"/></svg><div class="a" style="left:50px;top:73px;width:8px;height:1px;background:#a0a0a0"></div><svg class="a" style="left:58px;top:63px" width="20" height="20"><use href="#i_tag"/></svg><div class="t n" style="left:82px;top:66px">K4_text2</div><svg class="a" style="left:2px;top:91px" width="11" height="8"><use href="#eye"/></svg><svg class="a" style="left:15px;top:89px" width="10" height="11"><use href="#lock"/></svg><div class="a" style="left:50px;top:94px;width:8px;height:1px;background:#a0a0a0"></div><svg class="a" style="left:58px;top:84px" width="20" height="20"><use href="#i_tag3"/></svg><div class="t n" style="left:82px;top:87px">K4_text3</div><svg class="a" style="left:2px;top:112px" width="11" height="8"><use href="#eye"/></svg><svg class="a" style="left:15px;top:110px" width="10" height="11"><use href="#lock"/></svg><div class="a" style="left:50px;top:115px;width:8px;height:1px;background:#a0a0a0"></div><svg class="a" style="left:58px;top:107px" width="20" height="16"><use href="#i_meter"/></svg><div class="t n" style="left:82px;top:108px">K4_kotel_levelindik1</div><svg class="a" style="left:2px;top:133px" width="11" height="8"><use href="#eye"/></svg><svg class="a" style="left:15px;top:131px" width="10" height="11"><use href="#lock"/></svg><div class="a" style="left:50px;top:136px;width:8px;height:1px;background:#a0a0a0"></div><svg class="a" style="left:58px;top:127px" width="19" height="19"><use href="#i_gauge"/></svg><div class="t n" style="left:82px;top:129px">K4_kotel_levelindik2</div><svg class="a" style="left:2px;top:154px" width="11" height="8"><use href="#eye"/></svg><svg class="a" style="left:15px;top:152px" width="10" height="11"><use href="#lock"/></svg><div class="a" style="left:50px;top:157px;width:8px;height:1px;background:#a0a0a0"></div><svg class="a" style="left:58px;top:147px" width="20" height="21"><use href="#i_disp"/></svg><div class="t n" style="left:82px;top:150px">K4_kotel_levelindik3</div><svg class="a" style="left:2px;top:175px" width="11" height="8"><use href="#eye"/></svg><svg class="a" style="left:15px;top:173px" width="10" height="11"><use href="#lock"/></svg><div class="a" style="left:50px;top:178px;width:8px;height:1px;background:#a0a0a0"></div><svg class="a" style="left:60px;top:168px" width="15" height="21"><use href="#i_bulb"/></svg><div class="t n" style="left:82px;top:171px">K4_kotel_levelindik4</div><svg class="a" style="left:2px;top:196px" width="11" height="8"><use href="#eye"/></svg><svg class="a" style="left:15px;top:194px" width="10" height="11"><use href="#lock"/></svg><div class="a" style="left:50px;top:199px;width:8px;height:1px;background:#a0a0a0"></div><svg class="a" style="left:58px;top:195px" width="20" height="9"><use href="#i_cyan"/></svg><div class="t n" style="left:82px;top:192px">K4_kotel_levelindik5</div><svg class="a" style="left:2px;top:217px" width="11" height="8"><use href="#eye"/></svg><svg class="a" style="left:15px;top:215px" width="10" height="11"><use href="#lock"/></svg><div class="a" style="left:50px;top:220px;width:8px;height:1px;background:#a0a0a0"></div><svg class="a" style="left:60px;top:210px" width="15" height="21"><use href="#i_bulb"/></svg><div class="t n" style="left:82px;top:213px">K4_kotel_levelindik6</div><svg class="a" style="left:2px;top:238px" width="11" height="8"><use href="#eye"/></svg><svg class="a" style="left:15px;top:236px" width="10" height="11"><use href="#lock"/></svg><div class="a" style="left:50px;top:241px;width:8px;height:1px;background:#a0a0a0"></div><svg class="a" style="left:58px;top:237px" width="20" height="9"><use href="#i_cyan"/></svg><div class="t n" style="left:82px;top:234px">K4_kotel_levelindik7</div><svg class="a" style="left:2px;top:259px" width="11" height="8"><use href="#eye"/></svg><svg class="a" style="left:15px;top:257px" width="10" height="11"><use href="#lock"/></svg><div class="a" style="left:50px;top:262px;width:8px;height:1px;background:#a0a0a0"></div><svg class="a" style="left:60px;top:252px" width="15" height="21"><use href="#i_bulb"/></svg><div class="t n" style="left:82px;top:255px">K4_kotel_levelindik8</div><svg class="a" style="left:2px;top:280px" width="11" height="8"><use href="#eye"/></svg><svg class="a" style="left:15px;top:278px" width="10" height="11"><use href="#lock"/></svg><div class="a" style="left:50px;top:283px;width:8px;height:1px;background:#a0a0a0"></div><svg class="a" style="left:58px;top:279px" width="20" height="9"><use href="#i_cyan"/></svg><div class="t n" style="left:82px;top:276px">K4_kotel_levelindik9</div><svg class="a" style="left:2px;top:301px" width="11" height="8"><use href="#eye"/></svg><svg class="a" style="left:15px;top:299px" width="10" height="11"><use href="#lock"/></svg><div class="a" style="left:50px;top:304px;width:8px;height:1px;background:#a0a0a0"></div><svg class="a" style="left:58px;top:295px" width="19" height="19"><use href="#i_gauge"/></svg><div class="t n" style="left:82px;top:297px">K4_kotel_condindik1</div><svg class="a" style="left:2px;top:322px" width="11" height="8"><use href="#eye"/></svg><svg class="a" style="left:15px;top:320px" width="10" height="11"><use href="#lock"/></svg><div class="a" style="left:50px;top:325px;width:8px;height:1px;background:#a0a0a0"></div><svg class="a" style="left:58px;top:315px" width="20" height="21"><use href="#i_disp"/></svg><div class="t n" style="left:82px;top:318px">K4_kotel_condindik2</div><svg class="a" style="left:2px;top:343px" width="11" height="8"><use href="#eye"/></svg><svg class="a" style="left:15px;top:341px" width="10" height="11"><use href="#lock"/></svg><div class="a" style="left:50px;top:346px;width:8px;height:1px;background:#a0a0a0"></div><svg class="a" style="left:58px;top:337px" width="19" height="19"><use href="#i_gauge"/></svg><div class="t n" style="left:82px;top:339px">K4_kotel_pressindik1</div><svg class="a" style="left:2px;top:364px" width="11" height="8"><use href="#eye"/></svg><svg class="a" style="left:15px;top:362px" width="10" height="11"><use href="#lock"/></svg><div class="a" style="left:50px;top:367px;width:8px;height:1px;background:#a0a0a0"></div><svg class="a" style="left:58px;top:357px" width="20" height="21"><use href="#i_disp"/></svg><div class="t n" style="left:82px;top:360px">K4_kotel_pressindik2</div><svg class="a" style="left:2px;top:385px" width="11" height="8"><use href="#eye"/></svg><svg class="a" style="left:15px;top:383px" width="10" height="11"><use href="#lock"/></svg><div class="a" style="left:50px;top:388px;width:8px;height:1px;background:#a0a0a0"></div><svg class="a" style="left:58px;top:379px" width="19" height="19"><use href="#i_bend"/></svg><div class="t n" style="left:82px;top:381px">K4_spalinypipe1</div><svg class="a" style="left:2px;top:406px" width="11" height="8"><use href="#eye"/></svg><svg class="a" style="left:15px;top:404px" width="10" height="11"><use href="#lock"/></svg><div class="a" style="left:50px;top:409px;width:8px;height:1px;background:#a0a0a0"></div><svg class="a" style="left:59px;top:400px" width="18" height="19"><use href="#i_pipes"/></svg><div class="t n" style="left:82px;top:402px">K4_spalinypipe2</div><svg class="a" style="left:2px;top:427px" width="11" height="8"><use href="#eye"/></svg><svg class="a" style="left:15px;top:425px" width="10" height="11"><use href="#lock"/></svg><div class="a" style="left:50px;top:430px;width:8px;height:1px;background:#a0a0a0"></div><svg class="a" style="left:58px;top:421px" width="19" height="19"><use href="#i_gauge"/></svg><div class="t n" style="left:82px;top:423px">K4_spalinypipe_flowindik1</div><svg class="a" style="left:2px;top:448px" width="11" height="8"><use href="#eye"/></svg><svg class="a" style="left:15px;top:446px" width="10" height="11"><use href="#lock"/></svg><div class="a" style="left:50px;top:451px;width:8px;height:1px;background:#a0a0a0"></div><svg class="a" style="left:58px;top:441px" width="20" height="21"><use href="#i_disp"/></svg><div class="t n" style="left:82px;top:444px">K4_spalinypipe_flowindik2</div><svg class="a" style="left:2px;top:469px" width="11" height="8"><use href="#eye"/></svg><svg class="a" style="left:15px;top:467px" width="10" height="11"><use href="#lock"/></svg><div class="a" style="left:50px;top:472px;width:8px;height:1px;background:#a0a0a0"></div><svg class="a" style="left:58px;top:468px" width="20" height="9"><use href="#i_bar"/></svg><div class="t n" style="left:82px;top:465px">K4_parapipe1</div><svg class="a" style="left:2px;top:490px" width="11" height="8"><use href="#eye"/></svg><svg class="a" style="left:15px;top:488px" width="10" height="11"><use href="#lock"/></svg><div class="a" style="left:50px;top:493px;width:8px;height:1px;background:#a0a0a0"></div><svg class="a" style="left:60px;top:484px" width="15" height="18"><use href="#i_disc"/></svg><div class="t n" style="left:82px;top:486px">K4_parapipe2</div><svg class="a" style="left:2px;top:511px" width="11" height="8"><use href="#eye"/></svg><svg class="a" style="left:15px;top:509px" width="10" height="11"><use href="#lock"/></svg><div class="a" style="left:50px;top:514px;width:8px;height:1px;background:#a0a0a0"></div><svg class="a" style="left:58px;top:510px" width="20" height="9"><use href="#i_bar"/></svg><div class="t n" style="left:82px;top:507px">K4_parapipe3</div><svg class="a" style="left:2px;top:532px" width="11" height="8"><use href="#eye"/></svg><svg class="a" style="left:15px;top:530px" width="10" height="11"><use href="#lock"/></svg><div class="a" style="left:50px;top:535px;width:8px;height:1px;background:#a0a0a0"></div><svg class="a" style="left:58px;top:526px" width="20" height="18"><use href="#i_valve"/></svg><div class="t n" style="left:82px;top:528px">K4_parapipe4</div><svg class="a" style="left:2px;top:553px" width="11" height="8"><use href="#eye"/></svg><svg class="a" style="left:15px;top:551px" width="10" height="11"><use href="#lock"/></svg><div class="a" style="left:50px;top:556px;width:8px;height:1px;background:#a0a0a0"></div><svg class="a" style="left:60px;top:546px" width="15" height="21"><use href="#i_bulb"/></svg><div class="t n" style="left:82px;top:549px">K4_parapipe4_manual</div><svg class="a" style="left:2px;top:574px" width="11" height="8"><use href="#eye"/></svg><svg class="a" style="left:15px;top:572px" width="10" height="11"><use href="#lock"/></svg><div class="a" style="left:50px;top:577px;width:8px;height:1px;background:#a0a0a0"></div><svg class="a" style="left:58px;top:573px" width="20" height="9"><use href="#i_bar"/></svg><div class="t n" style="left:82px;top:570px">K4_parapipe5</div><svg class="a" style="left:2px;top:595px" width="11" height="8"><use href="#eye"/></svg><svg class="a" style="left:15px;top:593px" width="10" height="11"><use href="#lock"/></svg><div class="a" style="left:50px;top:598px;width:8px;height:1px;background:#a0a0a0"></div><svg class="a" style="left:58px;top:588px" width="20" height="21"><use href="#i_disp"/></svg><div class="t n" style="left:82px;top:591px">K4_parapipe_flowindik</div><svg class="a" style="left:2px;top:616px" width="11" height="8"><use href="#eye"/></svg><svg class="a" style="left:15px;top:614px" width="10" height="11"><use href="#lock"/></svg><div class="a" style="left:50px;top:619px;width:8px;height:1px;background:#a0a0a0"></div><svg class="a" style="left:58px;top:609px" width="20" height="21"><use href="#i_disp"/></svg><div class="t n" style="left:82px;top:612px">K4_vodapipe_flowindik1</div><svg class="a" style="left:2px;top:637px" width="11" height="8"><use href="#eye"/></svg><svg class="a" style="left:15px;top:635px" width="10" height="11"><use href="#lock"/></svg><div class="a" style="left:50px;top:640px;width:8px;height:1px;background:#a0a0a0"></div><svg class="a" style="left:58px;top:630px" width="20" height="21"><use href="#i_disp"/></svg><div class="t n" style="left:82px;top:633px">K4_vodapipe_flowindik2</div><svg class="a" style="left:2px;top:658px" width="11" height="8"><use href="#eye"/></svg><svg class="a" style="left:15px;top:656px" width="10" height="11"><use href="#lock"/></svg><div class="a" style="left:50px;top:661px;width:8px;height:1px;background:#a0a0a0"></div><svg class="a" style="left:58px;top:652px" width="19" height="19"><use href="#i_gauge"/></svg><div class="t n" style="left:82px;top:654px">K4_vodapipe_tempindik1</div><svg class="a" style="left:2px;top:679px" width="11" height="8"><use href="#eye"/></svg><svg class="a" style="left:15px;top:677px" width="10" height="11"><use href="#lock"/></svg><div class="a" style="left:50px;top:682px;width:8px;height:1px;background:#a0a0a0"></div><svg class="a" style="left:58px;top:672px" width="20" height="21"><use href="#i_disp"/></svg><div class="t n" style="left:82px;top:675px">K4_vodapipe_tempindik2</div><svg class="a" style="left:2px;top:700px" width="11" height="8"><use href="#eye"/></svg><svg class="a" style="left:15px;top:698px" width="10" height="11"><use href="#lock"/></svg><div class="a" style="left:50px;top:703px;width:8px;height:1px;background:#a0a0a0"></div><svg class="a" style="left:58px;top:699px" width="20" height="9"><use href="#i_bar"/></svg><div class="t n" style="left:82px;top:696px">K4_vodapipe1</div></div>
<div class="vs" style="left:231px;top:193px;width:16px;height:702px;background:linear-gradient(90deg,#dcdcdc,#e8e8e8)"></div>
<div class="a" style="left:231px;top:194px;width:16px;height:16px;background:linear-gradient(90deg,#fafafa,#e4e4e4);border:1px solid #d8d8d8"></div>
<svg class="a" style="left:234px;top:198px" width="10" height="8"><path d="M1 6 L5 2 L9 6Z" fill="#000"/></svg>
<div class="a" style="left:231px;top:211px;width:16px;height:207px;background:linear-gradient(90deg,#f6f6f6,#e2e2e2 70%,#d0d0d0);border:1px solid #d4d4d4"></div>
<svg class="a" style="left:234px;top:323px" width="10" height="8"><path d="M1 1H9M1 3.5H9M1 6H9" stroke="#888"/></svg>
<div class="a" style="left:231px;top:878px;width:16px;height:16px;background:linear-gradient(90deg,#fafafa,#e4e4e4);border:1px solid #d8d8d8"></div>
<svg class="a" style="left:234px;top:883px" width="10" height="8"><path d="M1 2 L5 6 L9 2Z" fill="#000"/></svg>
<div class="a" style="left:23px;top:895px;width:208px;height:17px;background:linear-gradient(#e0e0e0,#ececec)"></div>
<div class="a" style="left:24px;top:896px;width:15px;height:16px;background:linear-gradient(#fafafa,#e4e4e4);border:1px solid #d8d8d8"></div>
<svg class="a" style="left:28px;top:899px" width="8" height="10"><path d="M6 1 L2 5 L6 9Z" fill="#999"/></svg>
<div class="a" style="left:40px;top:896px;width:135px;height:16px;background:linear-gradient(#f8f8f8,#e0e0e0);border:1px solid #d0d0d0"></div>
<svg class="a" style="left:103px;top:899px" width="10" height="10"><path d="M1 1V9M3.5 1V9M6 1V9M8.5 1V9" stroke="#888"/></svg>
<div class="a" style="left:214px;top:896px;width:15px;height:16px;background:linear-gradient(#fafafa,#e4e4e4);border:1px solid #d8d8d8"></div>
<svg class="a" style="left:218px;top:899px" width="8" height="10"><path d="M2 1 L6 5 L2 9Z" fill="#000"/></svg>
<div class="a" style="left:23px;top:913px;width:224px;height:5px;background:linear-gradient(#f0f0f0,#d8d8d8);border-bottom:1px solid #a8a8a8"></div>
<div class="a" style="left:23px;top:918px;width:224px;height:32px;background:#fff"></div>
<!-- splitter -->
<div class="a" style="left:247px;top:167px;width:6px;height:783px;background:linear-gradient(90deg,#f0f0f0,#fafafa 40%,#c8c8c8)"></div>

<!-- CANVAS -->
<div class="a" style="left:253px;top:167px;width:1024px;height:766px;background:#000;overflow:hidden">
<svg id="cv" width="1024" height="766" viewBox="253 167 1024 766" style="position:absolute;left:0;top:0">
<defs>
<linearGradient id="pH" x1="0" y1="0" x2="0" y2="1"><stop offset="0" stop-color="#8c8c8c"/><stop offset="0.28" stop-color="#f6f6f6"/><stop offset="0.5" stop-color="#c8c8c8"/><stop offset="0.8" stop-color="#6a6a6a"/><stop offset="1" stop-color="#141414"/></linearGradient>
<linearGradient id="pV" x1="0" y1="0" x2="1" y2="0"><stop offset="0" stop-color="#8c8c8c"/><stop offset="0.28" stop-color="#f6f6f6"/><stop offset="0.5" stop-color="#c8c8c8"/><stop offset="0.8" stop-color="#6a6a6a"/><stop offset="1" stop-color="#141414"/></linearGradient>
<linearGradient id="yP" x1="0" y1="0" x2="0" y2="1"><stop offset="0" stop-color="#b8b870"/><stop offset="0.3" stop-color="#ffffff"/><stop offset="0.55" stop-color="#c8c890"/><stop offset="0.8" stop-color="#787820"/><stop offset="1" stop-color="#202000"/></linearGradient>
<linearGradient id="boilG" x1="0" y1="0" x2="1" y2="0"><stop offset="0" stop-color="#b8b8b8"/><stop offset="0.1" stop-color="#cccccc"/><stop offset="0.3" stop-color="#d8d8d8"/><stop offset="0.6" stop-color="#a8a8a8"/><stop offset="0.85" stop-color="#787878"/><stop offset="1" stop-color="#585858"/></linearGradient>
<linearGradient id="stripeG" x1="0" y1="0" x2="1" y2="0"><stop offset="0" stop-color="#d8d8d8"/><stop offset="0.35" stop-color="#e8e8e8"/><stop offset="1" stop-color="#8a8a8a"/></linearGradient>
<linearGradient id="purG" x1="0" y1="0" x2="1" y2="0"><stop offset="0" stop-color="#8c8cd4"/><stop offset="0.15" stop-color="#aaaaf0"/><stop offset="0.35" stop-color="#b4b4f8"/><stop offset="0.55" stop-color="#8080c8"/><stop offset="0.8" stop-color="#50509c"/><stop offset="1" stop-color="#32326e"/></linearGradient>
<linearGradient id="purB" x1="0" y1="0" x2="1" y2="0"><stop offset="0" stop-color="#9090d8"/><stop offset="0.3" stop-color="#b0b0f4"/><stop offset="0.6" stop-color="#7070bc"/><stop offset="1" stop-color="#30306c"/></linearGradient>
<linearGradient id="chimG" x1="0" y1="0" x2="1" y2="0"><stop offset="0" stop-color="#707070"/><stop offset="0.2" stop-color="#a8a8a8"/><stop offset="0.55" stop-color="#c4c4c4"/><stop offset="0.8" stop-color="#a0a0a0"/><stop offset="1" stop-color="#7a7a7a"/></linearGradient>
<linearGradient id="redG" x1="0" y1="0" x2="1" y2="0"><stop offset="0" stop-color="#c00000"/><stop offset="0.5" stop-color="#ff1010"/><stop offset="1" stop-color="#a00000"/></linearGradient>
<linearGradient id="tankG" x1="0" y1="0" x2="1" y2="0"><stop offset="0" stop-color="#9a9a9a"/><stop offset="0.2" stop-color="#c8c8c8"/><stop offset="0.5" stop-color="#b0b0b0"/><stop offset="1" stop-color="#6c6c6c"/></linearGradient>
<linearGradient id="tankP" x1="0" y1="0" x2="1" y2="0"><stop offset="0" stop-color="#8c8cd8"/><stop offset="0.25" stop-color="#b0b0f8"/><stop offset="0.6" stop-color="#7070c0"/><stop offset="1" stop-color="#383880"/></linearGradient>
<radialGradient id="gface" cx="0.45" cy="0.45" r="0.6"><stop offset="0" stop-color="#b4b2ae"/><stop offset="1" stop-color="#9c9a96"/></radialGradient>
<radialGradient id="ball" cx="0.4" cy="0.35" r="0.65"><stop offset="0" stop-color="#ffffff"/><stop offset="0.25" stop-color="#b8b8b8"/><stop offset="1" stop-color="#505050"/></radialGradient>
<linearGradient id="greenG" x1="0" y1="0" x2="0" y2="1"><stop offset="0" stop-color="#50b050"/><stop offset="0.4" stop-color="#b0f0a0"/><stop offset="1" stop-color="#207020"/></linearGradient>
<linearGradient id="greenV" x1="0" y1="0" x2="1" y2="0"><stop offset="0" stop-color="#50b050"/><stop offset="0.4" stop-color="#b0f0a0"/><stop offset="1" stop-color="#207020"/></linearGradient>
<linearGradient id="stemG" x1="0" y1="0" x2="1" y2="0"><stop offset="0" stop-color="#0a0a0a"/><stop offset="0.3" stop-color="#505050"/><stop offset="0.45" stop-color="#f0f0f0"/><stop offset="0.58" stop-color="#6a6a6a"/><stop offset="1" stop-color="#0a0a0a"/></linearGradient>
<linearGradient id="collG" x1="0" y1="0" x2="1" y2="0"><stop offset="0" stop-color="#303030"/><stop offset="0.4" stop-color="#909090"/><stop offset="0.5" stop-color="#d8d8d8"/><stop offset="0.7" stop-color="#606060"/><stop offset="1" stop-color="#202020"/></linearGradient>
<linearGradient id="flG" x1="0" y1="0" x2="1" y2="0"><stop offset="0" stop-color="#808080"/><stop offset="0.4" stop-color="#e4e4e4"/><stop offset="1" stop-color="#8a8a8a"/></linearGradient>
<linearGradient id="flGH" x1="0" y1="0" x2="0" y2="1"><stop offset="0" stop-color="#a0a0a0"/><stop offset="0.4" stop-color="#eeeeee"/><stop offset="1" stop-color="#8a8a8a"/></linearGradient>
<linearGradient id="flatG" x1="0" y1="0" x2="1" y2="0"><stop offset="0" stop-color="#9a9a9a"/><stop offset="0.45" stop-color="#e8e8e8"/><stop offset="1" stop-color="#909090"/></linearGradient>
<linearGradient id="flatV" x1="0" y1="0" x2="0" y2="1"><stop offset="0" stop-color="#a0a0a0"/><stop offset="0.5" stop-color="#e0e0e0"/><stop offset="1" stop-color="#909090"/></linearGradient>
<radialGradient id="ball2" cx="0.42" cy="0.38" r="0.6"><stop offset="0" stop-color="#ffffff"/><stop offset="0.2" stop-color="#c8c8c8"/><stop offset="0.6" stop-color="#a0a0a0"/><stop offset="1" stop-color="#808080"/></radialGradient>
<linearGradient id="btnG" x1="0" y1="0" x2="0" y2="1"><stop offset="0" stop-color="#f4f4f4"/><stop offset="1" stop-color="#d0d0d0"/></linearGradient>
<radialGradient id="flameW" cx="0.5" cy="0.5" r="0.5"><stop offset="0" stop-color="#ffffff"/><stop offset="0.6" stop-color="#ffffff"/><stop offset="1" stop-color="#ffffff" stop-opacity="0"/></radialGradient>
<radialGradient id="flameP" cx="0.5" cy="0.5" r="0.5"><stop offset="0" stop-color="#ffe8f8" stop-opacity="0.9"/><stop offset="0.5" stop-color="#f0c8e8" stop-opacity="0.5"/><stop offset="1" stop-color="#e0a0e0" stop-opacity="0"/></radialGradient>
<linearGradient id="fanG" x1="0" y1="0" x2="1" y2="0"><stop offset="0" stop-color="#a8d8e8"/><stop offset="0.45" stop-color="#5a8aa0"/><stop offset="0.55" stop-color="#1a3a48"/><stop offset="1" stop-color="#80b8d0"/></linearGradient>
<linearGradient id="exG" x1="0" y1="0" x2="0.25" y2="1"><stop offset="0" stop-color="#909090"/><stop offset="0.3" stop-color="#ffffff"/><stop offset="0.55" stop-color="#b0b0b0"/><stop offset="0.85" stop-color="#3a3a3a"/><stop offset="1" stop-color="#000000"/></linearGradient>
<filter id="blur2" x="-20%" y="-50%" width="140%" height="200%"><feGaussianBlur stdDeviation="4"/></filter>
<filter id="blur1" x="-20%" y="-50%" width="140%" height="200%"><feGaussianBlur stdDeviation="1.5"/></filter>
</defs>
<filter id="bl06" x="-5%" y="-5%" width="110%" height="110%"><feGaussianBlur stdDeviation="0.7"/></filter><g filter="url(#bl06)">
<linearGradient id="ex0" gradientUnits="userSpaceOnUse" x1="977.11" y1="469.95" x2="977.80" y2="496.93"><stop offset="0" stop-color="#a0a0a0"/><stop offset="0.3" stop-color="#ffffff"/><stop offset="0.55" stop-color="#b4b4b4"/><stop offset="0.8" stop-color="#3c3c3c"/><stop offset="1" stop-color="#000"/></linearGradient>
<path d="M975.0 470.0 L980.1 469.9 L982.6 496.8 L975.0 497.0Z" fill="url(#ex0)"/>
<linearGradient id="ex1" gradientUnits="userSpaceOnUse" x1="981.95" y1="469.82" x2="982.71" y2="496.80"><stop offset="0" stop-color="#a0a0a0"/><stop offset="0.3" stop-color="#ffffff"/><stop offset="0.55" stop-color="#b4b4b4"/><stop offset="0.8" stop-color="#3c3c3c"/><stop offset="1" stop-color="#000"/></linearGradient>
<path d="M977.8 469.9 L984.0 469.8 L988.3 496.6 L979.1 496.9Z" fill="url(#ex1)"/>
<linearGradient id="ex2" gradientUnits="userSpaceOnUse" x1="986.73" y1="469.68" x2="987.58" y2="496.66"><stop offset="0" stop-color="#a0a0a0"/><stop offset="0.3" stop-color="#ffffff"/><stop offset="0.55" stop-color="#b4b4b4"/><stop offset="0.8" stop-color="#3c3c3c"/><stop offset="1" stop-color="#000"/></linearGradient>
<path d="M981.7 469.8 L987.9 469.6 L994.1 496.4 L984.9 496.7Z" fill="url(#ex2)"/>
<linearGradient id="ex3" gradientUnits="userSpaceOnUse" x1="991.47" y1="469.52" x2="992.40" y2="496.50"><stop offset="0" stop-color="#a0a0a0"/><stop offset="0.3" stop-color="#ffffff"/><stop offset="0.55" stop-color="#b4b4b4"/><stop offset="0.8" stop-color="#3c3c3c"/><stop offset="1" stop-color="#000"/></linearGradient>
<path d="M985.6 469.7 L991.7 469.5 L999.7 496.2 L990.6 496.6Z" fill="url(#ex3)"/>
<linearGradient id="ex4" gradientUnits="userSpaceOnUse" x1="996.15" y1="469.34" x2="997.17" y2="496.33"><stop offset="0" stop-color="#a0a0a0"/><stop offset="0.3" stop-color="#ffffff"/><stop offset="0.55" stop-color="#b4b4b4"/><stop offset="0.8" stop-color="#3c3c3c"/><stop offset="1" stop-color="#000"/></linearGradient>
<path d="M989.4 469.6 L995.5 469.4 L1005.3 496.0 L996.3 496.4Z" fill="url(#ex4)"/>
<linearGradient id="ex5" gradientUnits="userSpaceOnUse" x1="1000.78" y1="469.15" x2="1001.90" y2="496.15"><stop offset="0" stop-color="#a0a0a0"/><stop offset="0.3" stop-color="#ffffff"/><stop offset="0.55" stop-color="#b4b4b4"/><stop offset="0.8" stop-color="#3c3c3c"/><stop offset="1" stop-color="#000"/></linearGradient>
<path d="M993.2 469.5 L999.2 469.2 L1010.9 495.8 L1002.0 496.2Z" fill="url(#ex5)"/>
<linearGradient id="ex6" gradientUnits="userSpaceOnUse" x1="1005.36" y1="468.94" x2="1006.58" y2="495.96"><stop offset="0" stop-color="#a0a0a0"/><stop offset="0.3" stop-color="#ffffff"/><stop offset="0.55" stop-color="#b4b4b4"/><stop offset="0.8" stop-color="#3c3c3c"/><stop offset="1" stop-color="#000"/></linearGradient>
<path d="M997.0 469.3 L1002.9 469.1 L1016.4 495.5 L1007.6 495.9Z" fill="url(#ex6)"/>
<linearGradient id="ex7" gradientUnits="userSpaceOnUse" x1="1009.88" y1="468.71" x2="1011.22" y2="495.76"><stop offset="0" stop-color="#a0a0a0"/><stop offset="0.3" stop-color="#ffffff"/><stop offset="0.55" stop-color="#b4b4b4"/><stop offset="0.8" stop-color="#3c3c3c"/><stop offset="1" stop-color="#000"/></linearGradient>
<path d="M1000.7 469.2 L1006.5 468.9 L1021.8 495.2 L1013.1 495.7Z" fill="url(#ex7)"/>
<linearGradient id="ex8" gradientUnits="userSpaceOnUse" x1="1014.35" y1="468.46" x2="1015.81" y2="495.54"><stop offset="0" stop-color="#a0a0a0"/><stop offset="0.3" stop-color="#ffffff"/><stop offset="0.55" stop-color="#b4b4b4"/><stop offset="0.8" stop-color="#3c3c3c"/><stop offset="1" stop-color="#000"/></linearGradient>
<path d="M1004.4 469.0 L1010.1 468.7 L1027.2 494.9 L1018.6 495.4Z" fill="url(#ex8)"/>
<linearGradient id="ex9" gradientUnits="userSpaceOnUse" x1="1018.77" y1="468.19" x2="1020.35" y2="495.31"><stop offset="0" stop-color="#a0a0a0"/><stop offset="0.3" stop-color="#ffffff"/><stop offset="0.55" stop-color="#b4b4b4"/><stop offset="0.8" stop-color="#3c3c3c"/><stop offset="1" stop-color="#000"/></linearGradient>
<path d="M1008.0 468.8 L1013.7 468.5 L1032.5 494.6 L1024.0 495.1Z" fill="url(#ex9)"/>
<linearGradient id="ex10" gradientUnits="userSpaceOnUse" x1="1023.13" y1="467.89" x2="1024.84" y2="495.06"><stop offset="0" stop-color="#a0a0a0"/><stop offset="0.3" stop-color="#ffffff"/><stop offset="0.55" stop-color="#b4b4b4"/><stop offset="0.8" stop-color="#3c3c3c"/><stop offset="1" stop-color="#000"/></linearGradient>
<path d="M1011.5 468.6 L1017.2 468.3 L1037.8 494.2 L1029.4 494.8Z" fill="url(#ex10)"/>
<linearGradient id="ex11" gradientUnits="userSpaceOnUse" x1="1027.44" y1="467.58" x2="1029.29" y2="494.81"><stop offset="0" stop-color="#a0a0a0"/><stop offset="0.3" stop-color="#ffffff"/><stop offset="0.55" stop-color="#b4b4b4"/><stop offset="0.8" stop-color="#3c3c3c"/><stop offset="1" stop-color="#000"/></linearGradient>
<path d="M1015.1 468.4 L1020.6 468.0 L1043.1 493.9 L1034.7 494.4Z" fill="url(#ex11)"/>
<linearGradient id="ex12" gradientUnits="userSpaceOnUse" x1="1031.69" y1="467.24" x2="1033.69" y2="494.54"><stop offset="0" stop-color="#a0a0a0"/><stop offset="0.3" stop-color="#ffffff"/><stop offset="0.55" stop-color="#b4b4b4"/><stop offset="0.8" stop-color="#3c3c3c"/><stop offset="1" stop-color="#000"/></linearGradient>
<path d="M1018.5 468.2 L1024.0 467.8 L1048.2 493.5 L1039.9 494.1Z" fill="url(#ex12)"/>
<linearGradient id="ex13" gradientUnits="userSpaceOnUse" x1="1035.88" y1="466.87" x2="1038.04" y2="494.25"><stop offset="0" stop-color="#a0a0a0"/><stop offset="0.3" stop-color="#ffffff"/><stop offset="0.55" stop-color="#b4b4b4"/><stop offset="0.8" stop-color="#3c3c3c"/><stop offset="1" stop-color="#000"/></linearGradient>
<path d="M1022.0 468.0 L1027.4 467.5 L1053.3 493.0 L1045.1 493.7Z" fill="url(#ex13)"/>
<linearGradient id="ex14" gradientUnits="userSpaceOnUse" x1="1040.02" y1="466.48" x2="1042.34" y2="493.95"><stop offset="0" stop-color="#a0a0a0"/><stop offset="0.3" stop-color="#ffffff"/><stop offset="0.55" stop-color="#b4b4b4"/><stop offset="0.8" stop-color="#3c3c3c"/><stop offset="1" stop-color="#000"/></linearGradient>
<path d="M1025.4 467.7 L1030.7 467.3 L1058.4 492.6 L1050.3 493.3Z" fill="url(#ex14)"/>
<linearGradient id="ex15" gradientUnits="userSpaceOnUse" x1="1044.10" y1="466.06" x2="1046.60" y2="493.64"><stop offset="0" stop-color="#a0a0a0"/><stop offset="0.3" stop-color="#ffffff"/><stop offset="0.55" stop-color="#b4b4b4"/><stop offset="0.8" stop-color="#3c3c3c"/><stop offset="1" stop-color="#000"/></linearGradient>
<path d="M1028.7 467.4 L1033.9 467.0 L1063.4 492.1 L1055.4 492.9Z" fill="url(#ex15)"/>
<linearGradient id="ex16" gradientUnits="userSpaceOnUse" x1="1048.12" y1="465.62" x2="1050.81" y2="493.32"><stop offset="0" stop-color="#a0a0a0"/><stop offset="0.3" stop-color="#ffffff"/><stop offset="0.55" stop-color="#b4b4b4"/><stop offset="0.8" stop-color="#3c3c3c"/><stop offset="1" stop-color="#000"/></linearGradient>
<path d="M1032.0 467.2 L1037.1 466.7 L1068.3 491.6 L1060.4 492.4Z" fill="url(#ex16)"/>
<linearGradient id="ex17" gradientUnits="userSpaceOnUse" x1="1052.09" y1="465.14" x2="1054.97" y2="492.98"><stop offset="0" stop-color="#a0a0a0"/><stop offset="0.3" stop-color="#ffffff"/><stop offset="0.55" stop-color="#b4b4b4"/><stop offset="0.8" stop-color="#3c3c3c"/><stop offset="1" stop-color="#000"/></linearGradient>
<path d="M1035.2 466.9 L1040.3 466.4 L1073.2 491.1 L1065.3 491.9Z" fill="url(#ex17)"/>
<linearGradient id="ex18" gradientUnits="userSpaceOnUse" x1="1055.99" y1="464.64" x2="1059.08" y2="492.63"><stop offset="0" stop-color="#a0a0a0"/><stop offset="0.3" stop-color="#ffffff"/><stop offset="0.55" stop-color="#b4b4b4"/><stop offset="0.8" stop-color="#3c3c3c"/><stop offset="1" stop-color="#000"/></linearGradient>
<path d="M1038.4 466.6 L1043.4 466.0 L1078.0 490.5 L1070.3 491.4Z" fill="url(#ex18)"/>
<linearGradient id="ex19" gradientUnits="userSpaceOnUse" x1="1059.83" y1="464.10" x2="1063.14" y2="492.26"><stop offset="0" stop-color="#a0a0a0"/><stop offset="0.3" stop-color="#ffffff"/><stop offset="0.55" stop-color="#b4b4b4"/><stop offset="0.8" stop-color="#3c3c3c"/><stop offset="1" stop-color="#000"/></linearGradient>
<path d="M1041.5 466.2 L1046.5 465.7 L1082.7 489.9 L1075.1 490.9Z" fill="url(#ex19)"/>
<linearGradient id="ex20" gradientUnits="userSpaceOnUse" x1="1063.61" y1="463.53" x2="1067.16" y2="491.88"><stop offset="0" stop-color="#a0a0a0"/><stop offset="0.3" stop-color="#ffffff"/><stop offset="0.55" stop-color="#b4b4b4"/><stop offset="0.8" stop-color="#3c3c3c"/><stop offset="1" stop-color="#000"/></linearGradient>
<path d="M1044.6 465.9 L1049.5 465.3 L1087.4 489.3 L1079.9 490.3Z" fill="url(#ex20)"/>
<linearGradient id="ex21" gradientUnits="userSpaceOnUse" x1="1067.32" y1="462.93" x2="1071.13" y2="491.49"><stop offset="0" stop-color="#a0a0a0"/><stop offset="0.3" stop-color="#ffffff"/><stop offset="0.55" stop-color="#b4b4b4"/><stop offset="0.8" stop-color="#3c3c3c"/><stop offset="1" stop-color="#000"/></linearGradient>
<path d="M1047.7 465.5 L1052.5 464.9 L1092.1 488.7 L1084.6 489.7Z" fill="url(#ex21)"/>
<linearGradient id="ex22" gradientUnits="userSpaceOnUse" x1="1070.98" y1="462.30" x2="1075.06" y2="491.08"><stop offset="0" stop-color="#a0a0a0"/><stop offset="0.3" stop-color="#ffffff"/><stop offset="0.55" stop-color="#b4b4b4"/><stop offset="0.8" stop-color="#3c3c3c"/><stop offset="1" stop-color="#000"/></linearGradient>
<path d="M1050.7 465.2 L1055.4 464.5 L1096.6 488.0 L1089.3 489.1Z" fill="url(#ex22)"/>
<linearGradient id="ex23" gradientUnits="userSpaceOnUse" x1="1074.56" y1="461.63" x2="1078.94" y2="490.66"><stop offset="0" stop-color="#a0a0a0"/><stop offset="0.3" stop-color="#ffffff"/><stop offset="0.55" stop-color="#b4b4b4"/><stop offset="0.8" stop-color="#3c3c3c"/><stop offset="1" stop-color="#000"/></linearGradient>
<path d="M1053.6 464.8 L1058.2 464.1 L1101.2 487.3 L1093.9 488.4Z" fill="url(#ex23)"/>
<linearGradient id="ex24" gradientUnits="userSpaceOnUse" x1="1078.08" y1="460.92" x2="1082.77" y2="490.23"><stop offset="0" stop-color="#a0a0a0"/><stop offset="0.3" stop-color="#ffffff"/><stop offset="0.55" stop-color="#b4b4b4"/><stop offset="0.8" stop-color="#3c3c3c"/><stop offset="1" stop-color="#000"/></linearGradient>
<path d="M1056.5 464.3 L1061.1 463.6 L1105.6 486.6 L1098.5 487.7Z" fill="url(#ex24)"/>
<linearGradient id="ex25" gradientUnits="userSpaceOnUse" x1="1081.54" y1="460.17" x2="1086.56" y2="489.78"><stop offset="0" stop-color="#a0a0a0"/><stop offset="0.3" stop-color="#ffffff"/><stop offset="0.55" stop-color="#b4b4b4"/><stop offset="0.8" stop-color="#3c3c3c"/><stop offset="1" stop-color="#000"/></linearGradient>
<path d="M1059.4 463.9 L1063.8 463.2 L1110.0 485.8 L1102.9 487.0Z" fill="url(#ex25)"/>
<linearGradient id="ex26" gradientUnits="userSpaceOnUse" x1="1084.92" y1="459.38" x2="1090.31" y2="489.32"><stop offset="0" stop-color="#a0a0a0"/><stop offset="0.3" stop-color="#ffffff"/><stop offset="0.55" stop-color="#b4b4b4"/><stop offset="0.8" stop-color="#3c3c3c"/><stop offset="1" stop-color="#000"/></linearGradient>
<path d="M1062.2 463.5 L1066.5 462.7 L1114.3 485.0 L1107.4 486.3Z" fill="url(#ex26)"/>
<linearGradient id="ex27" gradientUnits="userSpaceOnUse" x1="1088.23" y1="458.56" x2="1094.01" y2="488.85"><stop offset="0" stop-color="#a0a0a0"/><stop offset="0.3" stop-color="#ffffff"/><stop offset="0.55" stop-color="#b4b4b4"/><stop offset="0.8" stop-color="#3c3c3c"/><stop offset="1" stop-color="#000"/></linearGradient>
<path d="M1064.9 463.0 L1069.2 462.2 L1118.6 484.1 L1111.7 485.5Z" fill="url(#ex27)"/>
<linearGradient id="ex28" gradientUnits="userSpaceOnUse" x1="1091.47" y1="457.69" x2="1097.67" y2="488.36"><stop offset="0" stop-color="#a0a0a0"/><stop offset="0.3" stop-color="#ffffff"/><stop offset="0.55" stop-color="#b4b4b4"/><stop offset="0.8" stop-color="#3c3c3c"/><stop offset="1" stop-color="#000"/></linearGradient>
<path d="M1067.6 462.5 L1071.8 461.7 L1122.8 483.3 L1116.0 484.7Z" fill="url(#ex28)"/>
<linearGradient id="ex29" gradientUnits="userSpaceOnUse" x1="1094.64" y1="456.78" x2="1101.28" y2="487.86"><stop offset="0" stop-color="#a0a0a0"/><stop offset="0.3" stop-color="#ffffff"/><stop offset="0.55" stop-color="#b4b4b4"/><stop offset="0.8" stop-color="#3c3c3c"/><stop offset="1" stop-color="#000"/></linearGradient>
<path d="M1070.3 462.0 L1074.4 461.1 L1126.9 482.4 L1120.2 483.8Z" fill="url(#ex29)"/>
<linearGradient id="ex30" gradientUnits="userSpaceOnUse" x1="1097.73" y1="455.83" x2="1104.86" y2="487.35"><stop offset="0" stop-color="#a0a0a0"/><stop offset="0.3" stop-color="#ffffff"/><stop offset="0.55" stop-color="#b4b4b4"/><stop offset="0.8" stop-color="#3c3c3c"/><stop offset="1" stop-color="#000"/></linearGradient>
<path d="M1072.9 461.4 L1076.9 460.5 L1130.9 481.4 L1124.4 482.9Z" fill="url(#ex30)"/>
<linearGradient id="ex31" gradientUnits="userSpaceOnUse" x1="1100.75" y1="454.84" x2="1108.40" y2="486.82"><stop offset="0" stop-color="#a0a0a0"/><stop offset="0.3" stop-color="#ffffff"/><stop offset="0.55" stop-color="#b4b4b4"/><stop offset="0.8" stop-color="#3c3c3c"/><stop offset="1" stop-color="#000"/></linearGradient>
<path d="M1075.4 460.9 L1079.4 459.9 L1134.9 480.5 L1128.5 482.0Z" fill="url(#ex31)"/>
<linearGradient id="ex32" gradientUnits="userSpaceOnUse" x1="1103.68" y1="453.80" x2="1111.90" y2="486.28"><stop offset="0" stop-color="#a0a0a0"/><stop offset="0.3" stop-color="#ffffff"/><stop offset="0.55" stop-color="#b4b4b4"/><stop offset="0.8" stop-color="#3c3c3c"/><stop offset="1" stop-color="#000"/></linearGradient>
<path d="M1077.9 460.3 L1081.8 459.3 L1138.9 479.4 L1132.6 481.0Z" fill="url(#ex32)"/>
<linearGradient id="ex33" gradientUnits="userSpaceOnUse" x1="1106.53" y1="452.71" x2="1115.36" y2="485.73"><stop offset="0" stop-color="#a0a0a0"/><stop offset="0.3" stop-color="#ffffff"/><stop offset="0.55" stop-color="#b4b4b4"/><stop offset="0.8" stop-color="#3c3c3c"/><stop offset="1" stop-color="#000"/></linearGradient>
<path d="M1080.3 459.7 L1084.1 458.7 L1142.7 478.4 L1136.5 480.1Z" fill="url(#ex33)"/>
<linearGradient id="ex34" gradientUnits="userSpaceOnUse" x1="1109.30" y1="451.58" x2="1118.79" y2="485.16"><stop offset="0" stop-color="#a0a0a0"/><stop offset="0.3" stop-color="#ffffff"/><stop offset="0.55" stop-color="#b4b4b4"/><stop offset="0.8" stop-color="#3c3c3c"/><stop offset="1" stop-color="#000"/></linearGradient>
<path d="M1082.7 459.1 L1086.4 458.0 L1146.5 477.3 L1140.4 479.0Z" fill="url(#ex34)"/>
<linearGradient id="ex35" gradientUnits="userSpaceOnUse" x1="1111.98" y1="450.40" x2="1122.18" y2="484.57"><stop offset="0" stop-color="#a0a0a0"/><stop offset="0.3" stop-color="#ffffff"/><stop offset="0.55" stop-color="#b4b4b4"/><stop offset="0.8" stop-color="#3c3c3c"/><stop offset="1" stop-color="#000"/></linearGradient>
<path d="M1085.0 458.4 L1088.7 457.3 L1150.3 476.2 L1144.3 478.0Z" fill="url(#ex35)"/>
<linearGradient id="ex36" gradientUnits="userSpaceOnUse" x1="1114.57" y1="449.17" x2="1125.55" y2="483.97"><stop offset="0" stop-color="#a0a0a0"/><stop offset="0.3" stop-color="#ffffff"/><stop offset="0.55" stop-color="#b4b4b4"/><stop offset="0.8" stop-color="#3c3c3c"/><stop offset="1" stop-color="#000"/></linearGradient>
<path d="M1087.3 457.8 L1090.9 456.6 L1153.9 475.0 L1148.0 476.9Z" fill="url(#ex36)"/>
<linearGradient id="ex37" gradientUnits="userSpaceOnUse" x1="1117.07" y1="447.89" x2="1128.89" y2="483.35"><stop offset="0" stop-color="#a0a0a0"/><stop offset="0.3" stop-color="#ffffff"/><stop offset="0.55" stop-color="#b4b4b4"/><stop offset="0.8" stop-color="#3c3c3c"/><stop offset="1" stop-color="#000"/></linearGradient>
<path d="M1089.6 457.1 L1093.0 455.9 L1157.5 473.8 L1151.7 475.7Z" fill="url(#ex37)"/>
<linearGradient id="ex38" gradientUnits="userSpaceOnUse" x1="1119.47" y1="446.57" x2="1132.20" y2="482.72"><stop offset="0" stop-color="#a0a0a0"/><stop offset="0.3" stop-color="#ffffff"/><stop offset="0.55" stop-color="#b4b4b4"/><stop offset="0.8" stop-color="#3c3c3c"/><stop offset="1" stop-color="#000"/></linearGradient>
<path d="M1091.7 456.3 L1095.1 455.1 L1161.0 472.5 L1155.4 474.5Z" fill="url(#ex38)"/>
<linearGradient id="ex39" gradientUnits="userSpaceOnUse" x1="1121.77" y1="445.20" x2="1135.49" y2="482.06"><stop offset="0" stop-color="#a0a0a0"/><stop offset="0.3" stop-color="#ffffff"/><stop offset="0.55" stop-color="#b4b4b4"/><stop offset="0.8" stop-color="#3c3c3c"/><stop offset="1" stop-color="#000"/></linearGradient>
<path d="M1093.9 455.6 L1097.1 454.3 L1164.5 471.3 L1158.9 473.3Z" fill="url(#ex39)"/>
<linearGradient id="ex40" gradientUnits="userSpaceOnUse" x1="1123.97" y1="443.79" x2="1138.76" y2="481.39"><stop offset="0" stop-color="#a0a0a0"/><stop offset="0.3" stop-color="#ffffff"/><stop offset="0.55" stop-color="#b4b4b4"/><stop offset="0.8" stop-color="#3c3c3c"/><stop offset="1" stop-color="#000"/></linearGradient>
<path d="M1095.9 454.8 L1099.1 453.5 L1167.9 469.9 L1162.4 472.0Z" fill="url(#ex40)"/>
<linearGradient id="ex41" gradientUnits="userSpaceOnUse" x1="1126.07" y1="442.33" x2="1142.00" y2="480.69"><stop offset="0" stop-color="#a0a0a0"/><stop offset="0.3" stop-color="#ffffff"/><stop offset="0.55" stop-color="#b4b4b4"/><stop offset="0.8" stop-color="#3c3c3c"/><stop offset="1" stop-color="#000"/></linearGradient>
<path d="M1097.9 454.0 L1101.0 452.7 L1171.2 468.6 L1165.9 470.7Z" fill="url(#ex41)"/>
<linearGradient id="ex42" gradientUnits="userSpaceOnUse" x1="1128.05" y1="440.82" x2="1145.24" y2="479.96"><stop offset="0" stop-color="#a0a0a0"/><stop offset="0.3" stop-color="#ffffff"/><stop offset="0.55" stop-color="#b4b4b4"/><stop offset="0.8" stop-color="#3c3c3c"/><stop offset="1" stop-color="#000"/></linearGradient>
<path d="M1099.9 453.2 L1102.9 451.8 L1174.5 467.1 L1169.2 469.4Z" fill="url(#ex42)"/>
<linearGradient id="ex43" gradientUnits="userSpaceOnUse" x1="1129.92" y1="439.28" x2="1148.46" y2="479.21"><stop offset="0" stop-color="#a0a0a0"/><stop offset="0.3" stop-color="#ffffff"/><stop offset="0.55" stop-color="#b4b4b4"/><stop offset="0.8" stop-color="#3c3c3c"/><stop offset="1" stop-color="#000"/></linearGradient>
<path d="M1101.8 452.3 L1104.7 450.9 L1177.6 465.7 L1172.5 468.0Z" fill="url(#ex43)"/>
<linearGradient id="ex44" gradientUnits="userSpaceOnUse" x1="1131.68" y1="437.69" x2="1151.68" y2="478.43"><stop offset="0" stop-color="#a0a0a0"/><stop offset="0.3" stop-color="#ffffff"/><stop offset="0.55" stop-color="#b4b4b4"/><stop offset="0.8" stop-color="#3c3c3c"/><stop offset="1" stop-color="#000"/></linearGradient>
<path d="M1103.7 451.5 L1106.5 450.0 L1180.7 464.2 L1175.7 466.6Z" fill="url(#ex44)"/>
<linearGradient id="ex45" gradientUnits="userSpaceOnUse" x1="1133.31" y1="436.07" x2="1154.88" y2="477.60"><stop offset="0" stop-color="#a0a0a0"/><stop offset="0.3" stop-color="#ffffff"/><stop offset="0.55" stop-color="#b4b4b4"/><stop offset="0.8" stop-color="#3c3c3c"/><stop offset="1" stop-color="#000"/></linearGradient>
<path d="M1105.5 450.6 L1108.2 449.0 L1183.8 462.6 L1178.9 465.1Z" fill="url(#ex45)"/>
<linearGradient id="ex46" gradientUnits="userSpaceOnUse" x1="1134.82" y1="434.41" x2="1158.09" y2="476.74"><stop offset="0" stop-color="#a0a0a0"/><stop offset="0.3" stop-color="#ffffff"/><stop offset="0.55" stop-color="#b4b4b4"/><stop offset="0.8" stop-color="#3c3c3c"/><stop offset="1" stop-color="#000"/></linearGradient>
<path d="M1107.2 449.6 L1109.9 448.1 L1186.7 461.0 L1182.0 463.6Z" fill="url(#ex46)"/>
<linearGradient id="ex47" gradientUnits="userSpaceOnUse" x1="1136.20" y1="432.72" x2="1161.29" y2="475.84"><stop offset="0" stop-color="#a0a0a0"/><stop offset="0.3" stop-color="#ffffff"/><stop offset="0.55" stop-color="#b4b4b4"/><stop offset="0.8" stop-color="#3c3c3c"/><stop offset="1" stop-color="#000"/></linearGradient>
<path d="M1108.9 448.7 L1111.5 447.1 L1189.6 459.4 L1185.0 462.0Z" fill="url(#ex47)"/>
<linearGradient id="ex48" gradientUnits="userSpaceOnUse" x1="1137.45" y1="431.01" x2="1164.49" y2="474.88"><stop offset="0" stop-color="#a0a0a0"/><stop offset="0.3" stop-color="#ffffff"/><stop offset="0.55" stop-color="#b4b4b4"/><stop offset="0.8" stop-color="#3c3c3c"/><stop offset="1" stop-color="#000"/></linearGradient>
<path d="M1110.5 447.7 L1113.0 446.0 L1192.4 457.7 L1187.9 460.4Z" fill="url(#ex48)"/>
<linearGradient id="ex49" gradientUnits="userSpaceOnUse" x1="1138.57" y1="429.28" x2="1167.70" y2="473.86"><stop offset="0" stop-color="#a0a0a0"/><stop offset="0.3" stop-color="#ffffff"/><stop offset="0.55" stop-color="#b4b4b4"/><stop offset="0.8" stop-color="#3c3c3c"/><stop offset="1" stop-color="#000"/></linearGradient>
<path d="M1112.1 446.6 L1114.5 444.9 L1195.2 455.9 L1190.7 458.7Z" fill="url(#ex49)"/>
<linearGradient id="ex50" gradientUnits="userSpaceOnUse" x1="1139.55" y1="427.54" x2="1170.92" y2="472.78"><stop offset="0" stop-color="#a0a0a0"/><stop offset="0.3" stop-color="#ffffff"/><stop offset="0.55" stop-color="#b4b4b4"/><stop offset="0.8" stop-color="#3c3c3c"/><stop offset="1" stop-color="#000"/></linearGradient>
<path d="M1113.6 445.6 L1115.9 443.8 L1197.8 454.2 L1193.5 457.0Z" fill="url(#ex50)"/>
<linearGradient id="ex51" gradientUnits="userSpaceOnUse" x1="1140.40" y1="425.79" x2="1174.13" y2="471.62"><stop offset="0" stop-color="#a0a0a0"/><stop offset="0.3" stop-color="#ffffff"/><stop offset="0.55" stop-color="#b4b4b4"/><stop offset="0.8" stop-color="#3c3c3c"/><stop offset="1" stop-color="#000"/></linearGradient>
<path d="M1115.1 444.5 L1117.3 442.7 L1200.4 452.3 L1196.2 455.2Z" fill="url(#ex51)"/>
<linearGradient id="ex52" gradientUnits="userSpaceOnUse" x1="1141.11" y1="424.05" x2="1177.35" y2="470.39"><stop offset="0" stop-color="#a0a0a0"/><stop offset="0.3" stop-color="#ffffff"/><stop offset="0.55" stop-color="#b4b4b4"/><stop offset="0.8" stop-color="#3c3c3c"/><stop offset="1" stop-color="#000"/></linearGradient>
<path d="M1116.5 443.4 L1118.6 441.5 L1202.9 450.4 L1198.9 453.4Z" fill="url(#ex52)"/>
<linearGradient id="ex53" gradientUnits="userSpaceOnUse" x1="1141.69" y1="422.31" x2="1180.58" y2="469.06"><stop offset="0" stop-color="#a0a0a0"/><stop offset="0.3" stop-color="#ffffff"/><stop offset="0.55" stop-color="#b4b4b4"/><stop offset="0.8" stop-color="#3c3c3c"/><stop offset="1" stop-color="#000"/></linearGradient>
<path d="M1117.8 442.2 L1119.8 440.3 L1205.4 448.5 L1201.4 451.6Z" fill="url(#ex53)"/>
<linearGradient id="ex54" gradientUnits="userSpaceOnUse" x1="1142.13" y1="420.58" x2="1183.80" y2="467.64"><stop offset="0" stop-color="#a0a0a0"/><stop offset="0.3" stop-color="#ffffff"/><stop offset="0.55" stop-color="#b4b4b4"/><stop offset="0.8" stop-color="#3c3c3c"/><stop offset="1" stop-color="#000"/></linearGradient>
<path d="M1119.1 441.1 L1121.0 439.1 L1207.7 446.5 L1203.9 449.7Z" fill="url(#ex54)"/>
<linearGradient id="ex55" gradientUnits="userSpaceOnUse" x1="1142.44" y1="418.89" x2="1187.03" y2="466.10"><stop offset="0" stop-color="#a0a0a0"/><stop offset="0.3" stop-color="#ffffff"/><stop offset="0.55" stop-color="#b4b4b4"/><stop offset="0.8" stop-color="#3c3c3c"/><stop offset="1" stop-color="#000"/></linearGradient>
<path d="M1120.3 439.9 L1122.2 437.9 L1210.0 444.5 L1206.3 447.7Z" fill="url(#ex55)"/>
<linearGradient id="ex56" gradientUnits="userSpaceOnUse" x1="1142.63" y1="417.22" x2="1190.24" y2="464.45"><stop offset="0" stop-color="#a0a0a0"/><stop offset="0.3" stop-color="#ffffff"/><stop offset="0.55" stop-color="#b4b4b4"/><stop offset="0.8" stop-color="#3c3c3c"/><stop offset="1" stop-color="#000"/></linearGradient>
<path d="M1121.5 438.6 L1123.3 436.6 L1212.2 442.4 L1208.7 445.7Z" fill="url(#ex56)"/>
<linearGradient id="ex57" gradientUnits="userSpaceOnUse" x1="1142.69" y1="415.59" x2="1193.44" y2="462.68"><stop offset="0" stop-color="#a0a0a0"/><stop offset="0.3" stop-color="#ffffff"/><stop offset="0.55" stop-color="#b4b4b4"/><stop offset="0.8" stop-color="#3c3c3c"/><stop offset="1" stop-color="#000"/></linearGradient>
<path d="M1122.6 437.3 L1124.3 435.2 L1214.4 440.3 L1210.9 443.7Z" fill="url(#ex57)"/>
<linearGradient id="ex58" gradientUnits="userSpaceOnUse" x1="1142.64" y1="414.01" x2="1196.62" y2="460.77"><stop offset="0" stop-color="#a0a0a0"/><stop offset="0.3" stop-color="#ffffff"/><stop offset="0.55" stop-color="#b4b4b4"/><stop offset="0.8" stop-color="#3c3c3c"/><stop offset="1" stop-color="#000"/></linearGradient>
<path d="M1123.7 436.0 L1125.3 433.9 L1216.4 438.1 L1213.1 441.5Z" fill="url(#ex58)"/>
<linearGradient id="ex59" gradientUnits="userSpaceOnUse" x1="1142.49" y1="412.48" x2="1199.77" y2="458.72"><stop offset="0" stop-color="#a0a0a0"/><stop offset="0.3" stop-color="#ffffff"/><stop offset="0.55" stop-color="#b4b4b4"/><stop offset="0.8" stop-color="#3c3c3c"/><stop offset="1" stop-color="#000"/></linearGradient>
<path d="M1124.7 434.7 L1126.2 432.5 L1218.4 435.8 L1215.2 439.4Z" fill="url(#ex59)"/>
<linearGradient id="ex60" gradientUnits="userSpaceOnUse" x1="1142.23" y1="411.01" x2="1202.87" y2="456.53"><stop offset="0" stop-color="#a0a0a0"/><stop offset="0.3" stop-color="#ffffff"/><stop offset="0.55" stop-color="#b4b4b4"/><stop offset="0.8" stop-color="#3c3c3c"/><stop offset="1" stop-color="#000"/></linearGradient>
<path d="M1125.6 433.3 L1127.0 431.0 L1220.3 433.5 L1217.2 437.2Z" fill="url(#ex60)"/>
<linearGradient id="ex61" gradientUnits="userSpaceOnUse" x1="1141.90" y1="409.60" x2="1205.92" y2="454.18"><stop offset="0" stop-color="#a0a0a0"/><stop offset="0.3" stop-color="#ffffff"/><stop offset="0.55" stop-color="#b4b4b4"/><stop offset="0.8" stop-color="#3c3c3c"/><stop offset="1" stop-color="#000"/></linearGradient>
<path d="M1126.5 431.9 L1127.8 429.6 L1222.1 431.1 L1219.1 434.9Z" fill="url(#ex61)"/>
<linearGradient id="ex62" gradientUnits="userSpaceOnUse" x1="1141.49" y1="408.26" x2="1208.91" y2="451.68"><stop offset="0" stop-color="#a0a0a0"/><stop offset="0.3" stop-color="#ffffff"/><stop offset="0.55" stop-color="#b4b4b4"/><stop offset="0.8" stop-color="#3c3c3c"/><stop offset="1" stop-color="#000"/></linearGradient>
<path d="M1127.3 430.5 L1128.5 428.1 L1223.8 428.7 L1221.0 432.6Z" fill="url(#ex62)"/>
<linearGradient id="ex63" gradientUnits="userSpaceOnUse" x1="1141.12" y1="406.91" x2="1211.71" y2="449.09"><stop offset="0" stop-color="#a0a0a0"/><stop offset="0.3" stop-color="#ffffff"/><stop offset="0.55" stop-color="#b4b4b4"/><stop offset="0.8" stop-color="#3c3c3c"/><stop offset="1" stop-color="#000"/></linearGradient>
<path d="M1128.1 429.0 L1129.0 427.0 L1225.0 427.0 L1222.8 430.2Z" fill="url(#ex63)"/>
</g>
<path d="M1151 236 L1206 236 C1204 300 1208 370 1217 409 L1132 409 C1142 370 1153 300 1151 236Z" fill="url(#chimG)"/>
<path d="M1135 409 L1217 409 L1223 427 L1129 427Z" fill="url(#redG)"/>
<rect x="1148" y="226" width="59" height="10" fill="url(#redG)"/>
<rect x="1149" y="229.5" width="57" height="3.5" fill="#ffffff"/>
<linearGradient id="smA" gradientUnits="userSpaceOnUse" x1="0" y1="169" x2="0" y2="202"><stop offset="0" stop-color="#f4f4f4"/><stop offset="1" stop-color="#9a9a9a"/></linearGradient>
<linearGradient id="smB" gradientUnits="userSpaceOnUse" x1="0" y1="191" x2="0" y2="226"><stop offset="0" stop-color="#ececec"/><stop offset="1" stop-color="#868686"/></linearGradient>
<g fill="url(#smA)"><circle cx="1171" cy="185" r="14"/><circle cx="1186" cy="182" r="11"/><circle cx="1194" cy="192" r="8"/><circle cx="1162" cy="196" r="7"/><circle cx="1182" cy="193" r="10"/><circle cx="1195" cy="200" r="5"/></g>
<path d="M1160 226 L1165 208 L1170 211 L1167 226Z M1189 226 L1192 210 L1197 213 L1196 226Z" fill="#3a3a3a"/>
<g fill="url(#smB)"><circle cx="1177" cy="205" r="13"/><circle cx="1188" cy="209" r="7"/><circle cx="1172" cy="216" r="9"/><circle cx="1181" cy="218" r="9"/></g>
<circle cx="1160" cy="216" r="4.5" fill="#d8d8d8"/><circle cx="1196" cy="225" r="4" fill="#e0e0e0"/>
<rect x="617.5" y="167" width="24" height="384" fill="url(#pV)"/>
<rect x="609.5" y="334" width="39" height="4.5" fill="url(#flatG)"/>
<rect x="609.5" y="380" width="39" height="4.5" fill="url(#flatG)"/>
<circle cx="628" cy="338.5" r="1" fill="#222"/><circle cx="628" cy="380" r="1" fill="#222"/>
<ellipse cx="627" cy="358.5" rx="16.3" ry="13" fill="url(#ball2)"/>
<rect x="643" y="350" width="9" height="17" fill="url(#flatV)"/>
<rect x="652" y="353" width="16" height="12" rx="1.5" fill="url(#greenG)"/>
<rect x="609.5" y="524.5" width="40" height="8" fill="url(#flatG)"/>
<rect x="612" y="522.5" width="3" height="2" fill="#777"/><rect x="628" y="522.5" width="3" height="2" fill="#777"/><rect x="644" y="522.5" width="3" height="2" fill="#777"/>
<rect x="713.5" y="217.5" width="123" height="25" fill="url(#btnG)" stroke="#a8a8a8"/>
<text x="775" y="234" text-anchor="middle" font-family="Liberation Sans" font-size="11" fill="#000">Zpět do MENU</text>
<rect x="425" y="550" width="480" height="125" fill="url(#boilG)"/>
<rect x="425" y="637" width="480" height="6" fill="url(#stripeG)"/>
<rect x="425" y="675" width="480" height="96" fill="url(#purG)"/>
<rect x="425" y="771" width="480" height="10" fill="url(#stripeG)"/>
<rect x="415" y="781" width="500" height="19" fill="url(#purB)"/>
<ellipse cx="770" cy="723" rx="140" ry="26" fill="url(#flameP)" filter="url(#blur2)"/>
<path d="M600 706 C700 700 800 708 870 722 C800 738 700 746 600 740Z" fill="#f4e0f0" opacity="0.6" filter="url(#blur2)"/>
<path d="M427 724 C470 712 560 703 650 702 C700 702 722 712 726 722 C722 734 700 743 650 743 C560 743 470 736 427 724Z" fill="#fff4fc" opacity="0.8" filter="url(#blur2)"/>
<path d="M430 724 C470 715 560 706 650 705 C692 705 710 713 714 722 C710 732 692 740 650 740 C560 740 470 733 430 724Z" fill="#ffffff" filter="url(#blur1)"/>
<rect x="905" y="427" width="75" height="248" fill="#808080"/>
<rect x="905" y="637" width="75" height="6" fill="#9a9a9a"/>
<text x="912" y="465" font-family="Liberation Sans" font-weight="bold" font-size="33" fill="#ffff00" textLength="61" lengthAdjust="spacingAndGlyphs">ECO</text>
<text x="912" y="583" font-family="Liberation Sans" font-weight="bold" font-size="59" fill="#ffff00" textLength="64" lengthAdjust="spacingAndGlyphs">K4</text>
<text x="555" y="611" font-family="Liberation Sans" font-weight="bold" font-size="34.5" fill="#00ff00" textLength="152" lengthAdjust="spacingAndGlyphs">VYPNUTO</text>
<text x="256" y="839" font-family="Liberation Sans" font-weight="bold" font-size="18.5" fill="#ffff00" textLength="180" lengthAdjust="spacingAndGlyphs">K3 - ODLUH + ODKAL</text>
<rect x="446.5" y="516" width="11" height="8" fill="url(#stemG)"/>
<rect x="445" y="533" width="14" height="18" fill="url(#stemG)"/>
<rect x="441.5" y="524" width="21" height="9" fill="url(#collG)"/>
<circle cx="452" cy="493" r="22" fill="url(#gface)" stroke="#f2f2f2" stroke-width="2"/>
<circle cx="452" cy="476" r="0.8" fill="#7080a0"/>
<circle cx="438" cy="483" r="0.8" fill="#7080a0"/>
<circle cx="466" cy="483" r="0.8" fill="#7080a0"/>
<circle cx="438" cy="503" r="0.8" fill="#7080a0"/>
<circle cx="466" cy="503" r="0.8" fill="#7080a0"/>
<circle cx="452" cy="510" r="0.8" fill="#7080a0"/>
<path d="M441.5 504 L453 492 L454.5 493.5Z" fill="#d02020"/>
<circle cx="452" cy="493" r="3.2" fill="#ff3030"/>
<path d="M453 490 L457 487 L459 490 L455 494Z" fill="#ff4040"/>
<circle cx="451.2" cy="492" r="1.2" fill="#ffb0b0"/>
<rect x="541.5" y="516" width="11" height="8" fill="url(#stemG)"/>
<rect x="540" y="533" width="14" height="18" fill="url(#stemG)"/>
<rect x="536.5" y="524" width="21" height="9" fill="url(#collG)"/>
<circle cx="547" cy="493" r="22" fill="url(#gface)" stroke="#f2f2f2" stroke-width="2"/>
<circle cx="547" cy="476" r="0.8" fill="#7080a0"/>
<circle cx="533" cy="483" r="0.8" fill="#7080a0"/>
<circle cx="561" cy="483" r="0.8" fill="#7080a0"/>
<circle cx="533" cy="503" r="0.8" fill="#7080a0"/>
<circle cx="561" cy="503" r="0.8" fill="#7080a0"/>
<circle cx="547" cy="510" r="0.8" fill="#7080a0"/>
<path d="M536.5 504 L548 492 L549.5 493.5Z" fill="#d02020"/>
<circle cx="547" cy="493" r="3.2" fill="#ff3030"/>
<path d="M548 490 L552 487 L554 490 L550 494Z" fill="#ff4040"/>
<circle cx="546.2" cy="492" r="1.2" fill="#ffb0b0"/>
<rect x="493" y="620" width="11" height="20" fill="url(#stemG)"/>
<rect x="488" y="627" width="21" height="10" fill="url(#collG)"/>
<rect x="491" y="637" width="15" height="40" fill="url(#stemG)"/>
<circle cx="498" cy="683" r="8" fill="#c8c8c8" stroke="#909090"/>
<path d="M491 650 L506 650 L506 680 A7.5 7.5 0 0 1 491 680Z" fill="url(#pV)"/>
<circle cx="499" cy="598" r="21" fill="url(#gface)" stroke="#f2f2f2" stroke-width="2"/>
<circle cx="499" cy="581" r="0.8" fill="#7080a0"/>
<circle cx="485" cy="588" r="0.8" fill="#7080a0"/>
<circle cx="513" cy="588" r="0.8" fill="#7080a0"/>
<circle cx="485" cy="608" r="0.8" fill="#7080a0"/>
<circle cx="513" cy="608" r="0.8" fill="#7080a0"/>
<circle cx="499" cy="615" r="0.8" fill="#7080a0"/>
<path d="M488.5 609 L500 597 L501.5 598.5Z" fill="#d02020"/>
<circle cx="499" cy="598" r="3.2" fill="#ff3030"/>
<path d="M500 595 L504 592 L506 595 L502 599Z" fill="#ff4040"/>
<circle cx="498.2" cy="597" r="1.2" fill="#ffb0b0"/>
<rect x="253" y="717.0" width="172" height="20" fill="url(#yP)"/>
<rect x="292.5" y="682" width="11" height="8" fill="url(#stemG)"/>
<rect x="291" y="699" width="14" height="18" fill="url(#stemG)"/>
<rect x="287.5" y="690" width="21" height="9" fill="url(#collG)"/>
<circle cx="298" cy="659" r="22" fill="url(#gface)" stroke="#f2f2f2" stroke-width="2"/>
<circle cx="298" cy="642" r="0.8" fill="#7080a0"/>
<circle cx="284" cy="649" r="0.8" fill="#7080a0"/>
<circle cx="312" cy="649" r="0.8" fill="#7080a0"/>
<circle cx="284" cy="669" r="0.8" fill="#7080a0"/>
<circle cx="312" cy="669" r="0.8" fill="#7080a0"/>
<circle cx="298" cy="676" r="0.8" fill="#7080a0"/>
<path d="M287.5 670 L299 658 L300.5 659.5Z" fill="#d02020"/>
<circle cx="298" cy="659" r="3.2" fill="#ff3030"/>
<path d="M299 656 L303 653 L305 656 L301 660Z" fill="#ff4040"/>
<circle cx="297.2" cy="658" r="1.2" fill="#ffb0b0"/>
<circle cx="379" cy="725" r="24" fill="#000" stroke="#e0e0e0" stroke-width="1.5"/>
<path d="M355 725H403" stroke="#888" stroke-width="1"/>
<ellipse cx="379" cy="713" rx="5.5" ry="12" fill="url(#fanG)" transform="rotate(0 379 725)"/>
<ellipse cx="379" cy="713" rx="5.5" ry="12" fill="url(#fanG)" transform="rotate(60 379 725)"/>
<ellipse cx="379" cy="713" rx="5.5" ry="12" fill="url(#fanG)" transform="rotate(120 379 725)"/>
<ellipse cx="379" cy="713" rx="5.5" ry="12" fill="url(#fanG)" transform="rotate(180 379 725)"/>
<ellipse cx="379" cy="713" rx="5.5" ry="12" fill="url(#fanG)" transform="rotate(240 379 725)"/>
<ellipse cx="379" cy="713" rx="5.5" ry="12" fill="url(#fanG)" transform="rotate(300 379 725)"/>
<circle cx="379" cy="725" r="3" fill="#203040"/>
<rect x="703.5" y="493" width="14" height="58" fill="url(#pV)"/>
<radialGradient id="bd1" gradientUnits="userSpaceOnUse" cx="732.5" cy="493" r="29.0"><stop offset="0.517" stop-color="#7a7a7a"/><stop offset="0.662" stop-color="#d0d0d0"/><stop offset="0.817" stop-color="#f4f4f4"/><stop offset="0.928" stop-color="#a0a0a0"/><stop offset="1" stop-color="#3a3a3a"/></radialGradient>
<path d="M703.5 493 A29.0 29.0 0 0 1 732.5 464.0 L732.5 478.0 A15.0 15.0 0 0 0 717.5 493Z" fill="url(#bd1)"/>
<rect x="732.5" y="464.0" width="100.0" height="14" fill="url(#pH)"/>
<radialGradient id="bd2" gradientUnits="userSpaceOnUse" cx="832.5" cy="493" r="29.0"><stop offset="0.517" stop-color="#7a7a7a"/><stop offset="0.662" stop-color="#d0d0d0"/><stop offset="0.817" stop-color="#f4f4f4"/><stop offset="0.928" stop-color="#a0a0a0"/><stop offset="1" stop-color="#3a3a3a"/></radialGradient>
<path d="M861.5 493 A29.0 29.0 0 0 0 832.5 464.0 L832.5 478.0 A15.0 15.0 0 0 1 847.5 493Z" fill="url(#bd2)"/>
<rect x="847.5" y="493" width="14" height="90" fill="url(#pV)"/>
<radialGradient id="bd3" gradientUnits="userSpaceOnUse" cx="879.5" cy="583" r="32.0"><stop offset="0.562" stop-color="#7a7a7a"/><stop offset="0.694" stop-color="#d0d0d0"/><stop offset="0.834" stop-color="#f4f4f4"/><stop offset="0.934" stop-color="#a0a0a0"/><stop offset="1" stop-color="#3a3a3a"/></radialGradient>
<path d="M847.5 583 A32.0 32.0 0 0 0 879.5 615.0 L879.5 601.0 A18.0 18.0 0 0 1 861.5 583Z" fill="url(#bd3)"/>
<rect x="879.5" y="601.0" width="51.5" height="14" fill="url(#pH)"/>
<circle cx="939" cy="608" r="10" fill="#d0d0d0" stroke="#e8e8e8" stroke-width="0.8"/>
<circle cx="945.5" cy="611.8" r="0.8" fill="#444"/>
<circle cx="939.0" cy="615.5" r="0.8" fill="#444"/>
<circle cx="932.5" cy="611.8" r="0.8" fill="#444"/>
<circle cx="932.5" cy="604.2" r="0.8" fill="#444"/>
<circle cx="939.0" cy="600.5" r="0.8" fill="#444"/>
<circle cx="945.5" cy="604.2" r="0.8" fill="#444"/>
<path d="M930 601 L940 601 A7 7 0 0 1 940 615 L930 615Z" fill="url(#pH)"/>
<rect x="699.0" y="499.5" width="22" height="5" rx="1.2" fill="url(#flGH)"/>
<circle cx="701.5" cy="502" r="0.9" fill="#333"/><circle cx="718.5" cy="502" r="0.9" fill="#333"/>
<rect x="699.0" y="527.5" width="22" height="5" rx="1.2" fill="url(#flGH)"/>
<circle cx="701.5" cy="530" r="0.9" fill="#333"/><circle cx="718.5" cy="530" r="0.9" fill="#333"/>
<circle cx="710" cy="516" r="10.5" fill="url(#ball)"/>
<circle cx="710" cy="516" r="10.5" fill="none" stroke="#c42a2a" stroke-width="1.9"/>
<path d="M699.5 516H720.5M710 505.5V526.5" stroke="#c83030" stroke-width="1.6"/>
<circle cx="710" cy="516" r="2.3" fill="#c83030"/>
<rect x="881.5" y="597.0" width="5" height="22" rx="1.2" fill="url(#flG)"/>
<circle cx="884" cy="599.5" r="0.9" fill="#333"/><circle cx="884" cy="616.5" r="0.9" fill="#333"/>
<rect x="910.5" y="597.0" width="5" height="22" rx="1.2" fill="url(#flG)"/>
<circle cx="913" cy="599.5" r="0.9" fill="#333"/><circle cx="913" cy="616.5" r="0.9" fill="#333"/>
<circle cx="899" cy="608" r="10.5" fill="url(#ball)"/>
<circle cx="899" cy="608" r="10.5" fill="none" stroke="#c42a2a" stroke-width="1.9"/>
<path d="M888.5 608H909.5M899 597.5V618.5" stroke="#c83030" stroke-width="1.6"/>
<circle cx="899" cy="608" r="2.3" fill="#c83030"/>
<rect x="806.5" y="430" width="11" height="7" fill="url(#stemG)"/>
<rect x="805" y="446" width="14" height="19" fill="url(#stemG)"/>
<rect x="801.5" y="437" width="21" height="9" fill="url(#collG)"/>
<circle cx="812" cy="407" r="22" fill="url(#gface)" stroke="#f2f2f2" stroke-width="2"/>
<circle cx="812" cy="390" r="0.8" fill="#7080a0"/>
<circle cx="798" cy="397" r="0.8" fill="#7080a0"/>
<circle cx="826" cy="397" r="0.8" fill="#7080a0"/>
<circle cx="798" cy="417" r="0.8" fill="#7080a0"/>
<circle cx="826" cy="417" r="0.8" fill="#7080a0"/>
<circle cx="812" cy="424" r="0.8" fill="#7080a0"/>
<path d="M801.5 418 L813 406 L814.5 407.5Z" fill="#d02020"/>
<circle cx="812" cy="407" r="3.2" fill="#ff3030"/>
<path d="M813 404 L817 401 L819 404 L815 408Z" fill="#ff4040"/>
<circle cx="811.2" cy="406" r="1.2" fill="#ffb0b0"/>
<rect x="676" y="658.0" width="133" height="14" fill="url(#pH)"/>
<circle cx="667.5" cy="665" r="10" fill="#d0d0d0" stroke="#e8e8e8" stroke-width="0.8"/>
<circle cx="674.0" cy="668.8" r="0.8" fill="#444"/>
<circle cx="667.5" cy="672.5" r="0.8" fill="#444"/>
<circle cx="661.0" cy="668.8" r="0.8" fill="#444"/>
<circle cx="661.0" cy="661.2" r="0.8" fill="#444"/>
<circle cx="667.5" cy="657.5" r="0.8" fill="#444"/>
<circle cx="674.0" cy="661.2" r="0.8" fill="#444"/>
<path d="M668 658 A7 7 0 0 0 668 672 L680 672 L680 658Z" fill="url(#pH)"/>
<rect x="692.5" y="654.0" width="5" height="22" rx="1.2" fill="url(#flG)"/>
<circle cx="695" cy="656.5" r="0.9" fill="#333"/><circle cx="695" cy="673.5" r="0.9" fill="#333"/>
<rect x="721.5" y="654.0" width="5" height="22" rx="1.2" fill="url(#flG)"/>
<circle cx="724" cy="656.5" r="0.9" fill="#333"/><circle cx="724" cy="673.5" r="0.9" fill="#333"/>
<circle cx="710" cy="665" r="10.5" fill="url(#ball)"/>
<circle cx="710" cy="665" r="10.5" fill="none" stroke="#c42a2a" stroke-width="1.9"/>
<path d="M699.5 665H720.5M710 654.5V675.5" stroke="#c83030" stroke-width="1.6"/>
<circle cx="710" cy="665" r="2.3" fill="#c83030"/>
<rect x="778.5" y="654.0" width="5" height="22" rx="1.2" fill="url(#flG)"/>
<circle cx="781" cy="656.5" r="0.9" fill="#333"/><circle cx="781" cy="673.5" r="0.9" fill="#333"/>
<rect x="802.5" y="654.0" width="5" height="22" rx="1.2" fill="url(#flG)"/>
<circle cx="805" cy="656.5" r="0.9" fill="#333"/><circle cx="805" cy="673.5" r="0.9" fill="#333"/>
<rect x="783" y="659" width="20" height="12" fill="url(#pH)"/>
<circle cx="793" cy="665" r="9" fill="url(#ball)"/>
<rect x="791" y="651" width="4" height="6" fill="#c0c0c0"/>
<rect x="789" y="641" width="8" height="10" fill="url(#greenV)"/>
<radialGradient id="bd4" gradientUnits="userSpaceOnUse" cx="809" cy="694" r="36.0"><stop offset="0.611" stop-color="#7a7a7a"/><stop offset="0.728" stop-color="#d0d0d0"/><stop offset="0.852" stop-color="#f4f4f4"/><stop offset="0.942" stop-color="#a0a0a0"/><stop offset="1" stop-color="#3a3a3a"/></radialGradient>
<path d="M845.0 694 A36.0 36.0 0 0 0 809 658.0 L809 672.0 A22.0 22.0 0 0 1 831.0 694Z" fill="url(#bd4)"/>
<rect x="831.0" y="694" width="14" height="158" fill="url(#pV)"/>
<rect x="676" y="782.0" width="160" height="14" fill="url(#pH)"/>
<circle cx="667.5" cy="789" r="10" fill="#d0d0d0" stroke="#e8e8e8" stroke-width="0.8"/>
<circle cx="674.0" cy="792.8" r="0.8" fill="#444"/>
<circle cx="667.5" cy="796.5" r="0.8" fill="#444"/>
<circle cx="661.0" cy="792.8" r="0.8" fill="#444"/>
<circle cx="661.0" cy="785.2" r="0.8" fill="#444"/>
<circle cx="667.5" cy="781.5" r="0.8" fill="#444"/>
<circle cx="674.0" cy="785.2" r="0.8" fill="#444"/>
<path d="M668 782 A7 7 0 0 0 668 796 L680 796 L680 782Z" fill="url(#pH)"/>
<rect x="692.5" y="778.0" width="5" height="22" rx="1.2" fill="url(#flG)"/>
<circle cx="695" cy="780.5" r="0.9" fill="#333"/><circle cx="695" cy="797.5" r="0.9" fill="#333"/>
<rect x="721.5" y="778.0" width="5" height="22" rx="1.2" fill="url(#flG)"/>
<circle cx="724" cy="780.5" r="0.9" fill="#333"/><circle cx="724" cy="797.5" r="0.9" fill="#333"/>
<circle cx="710" cy="789" r="10.5" fill="url(#ball)"/>
<circle cx="710" cy="789" r="10.5" fill="none" stroke="#c42a2a" stroke-width="1.9"/>
<path d="M699.5 789H720.5M710 778.5V799.5" stroke="#c83030" stroke-width="1.6"/>
<circle cx="710" cy="789" r="2.3" fill="#c83030"/>
<rect x="778.5" y="778.0" width="5" height="22" rx="1.2" fill="url(#flG)"/>
<circle cx="781" cy="780.5" r="0.9" fill="#333"/><circle cx="781" cy="797.5" r="0.9" fill="#333"/>
<rect x="802.5" y="778.0" width="5" height="22" rx="1.2" fill="url(#flG)"/>
<circle cx="805" cy="780.5" r="0.9" fill="#333"/><circle cx="805" cy="797.5" r="0.9" fill="#333"/>
<rect x="783" y="783" width="20" height="12" fill="url(#pH)"/>
<circle cx="793" cy="789" r="9" fill="url(#ball)"/>
<rect x="791" y="775" width="4" height="6" fill="#c0c0c0"/>
<rect x="789" y="765" width="8" height="10" fill="url(#greenV)"/>
<rect x="253" y="843.0" width="1024" height="15" fill="url(#pH)"/>
<circle cx="943" cy="518" r="10" fill="#d0d0d0" stroke="#e8e8e8" stroke-width="0.8"/>
<circle cx="949.5" cy="521.8" r="0.8" fill="#444"/>
<circle cx="943.0" cy="525.5" r="0.8" fill="#444"/>
<circle cx="936.5" cy="521.8" r="0.8" fill="#444"/>
<circle cx="936.5" cy="514.2" r="0.8" fill="#444"/>
<circle cx="943.0" cy="510.5" r="0.8" fill="#444"/>
<circle cx="949.5" cy="514.2" r="0.8" fill="#444"/>
<rect x="950" y="511.0" width="55" height="14" fill="url(#pH)"/>
<path d="M950 511 A7 7 0 0 0 950 525 L958 525 L958 511Z" fill="url(#pH)"/>
<rect x="967.5" y="507.0" width="5" height="22" rx="1.2" fill="url(#flG)"/>
<circle cx="970" cy="509.5" r="0.9" fill="#333"/><circle cx="970" cy="526.5" r="0.9" fill="#333"/>
<rect x="996.5" y="507.0" width="5" height="22" rx="1.2" fill="url(#flG)"/>
<circle cx="999" cy="509.5" r="0.9" fill="#333"/><circle cx="999" cy="526.5" r="0.9" fill="#333"/>
<circle cx="985" cy="518" r="10.5" fill="url(#ball)"/>
<circle cx="985" cy="518" r="10.5" fill="none" stroke="#c42a2a" stroke-width="1.9"/>
<path d="M974.5 518H995.5M985 507.5V528.5" stroke="#c83030" stroke-width="1.6"/>
<circle cx="985" cy="518" r="2.3" fill="#c83030"/>
<radialGradient id="bd5" gradientUnits="userSpaceOnUse" cx="1005" cy="542" r="31.0"><stop offset="0.548" stop-color="#7a7a7a"/><stop offset="0.684" stop-color="#d0d0d0"/><stop offset="0.828" stop-color="#f4f4f4"/><stop offset="0.932" stop-color="#a0a0a0"/><stop offset="1" stop-color="#3a3a3a"/></radialGradient>
<path d="M1036.0 542 A31.0 31.0 0 0 0 1005 511.0 L1005 525.0 A17.0 17.0 0 0 1 1022.0 542Z" fill="url(#bd5)"/>
<rect x="1022.5" y="542" width="13" height="98" fill="url(#pV)"/>
<radialGradient id="bd6" gradientUnits="userSpaceOnUse" cx="1056" cy="640" r="33.5"><stop offset="0.612" stop-color="#7a7a7a"/><stop offset="0.728" stop-color="#d0d0d0"/><stop offset="0.853" stop-color="#f4f4f4"/><stop offset="0.942" stop-color="#a0a0a0"/><stop offset="1" stop-color="#3a3a3a"/></radialGradient>
<path d="M1022.5 640 A33.5 33.5 0 0 0 1056 673.5 L1056 660.5 A20.5 20.5 0 0 1 1035.5 640Z" fill="url(#bd6)"/>
<rect x="1056" y="660.5" width="221" height="13" fill="url(#pH)"/>
<rect x="1019.0" y="546.5" width="20" height="5" rx="1.2" fill="url(#flGH)"/>
<circle cx="1021.5" cy="549" r="0.9" fill="#333"/><circle cx="1036.5" cy="549" r="0.9" fill="#333"/>
<rect x="1019.0" y="574.5" width="20" height="5" rx="1.2" fill="url(#flGH)"/>
<circle cx="1021.5" cy="577" r="0.9" fill="#333"/><circle cx="1036.5" cy="577" r="0.9" fill="#333"/>
<circle cx="1029" cy="563" r="10" fill="url(#ball)"/>
<rect x="1038" y="559" width="6" height="8" fill="#c0c0c0"/><rect x="1043" y="557" width="10" height="11" rx="2" fill="url(#greenG)"/>
<radialGradient id="bd7" gradientUnits="userSpaceOnUse" cx="1110.5" cy="628" r="27.5"><stop offset="0.455" stop-color="#7a7a7a"/><stop offset="0.618" stop-color="#d0d0d0"/><stop offset="0.793" stop-color="#f4f4f4"/><stop offset="0.918" stop-color="#a0a0a0"/><stop offset="1" stop-color="#3a3a3a"/></radialGradient>
<path d="M1083.0 628 A27.5 27.5 0 0 1 1110.5 600.5 L1110.5 615.5 A12.5 12.5 0 0 0 1098.0 628Z" fill="url(#bd7)"/>
<rect x="1083.0" y="628" width="15" height="39" fill="url(#pV)"/>
<rect x="1110.5" y="600.5" width="100.0" height="15" fill="url(#pH)"/>
<radialGradient id="bd8" gradientUnits="userSpaceOnUse" cx="1210.5" cy="628" r="27.5"><stop offset="0.455" stop-color="#7a7a7a"/><stop offset="0.618" stop-color="#d0d0d0"/><stop offset="0.793" stop-color="#f4f4f4"/><stop offset="0.918" stop-color="#a0a0a0"/><stop offset="1" stop-color="#3a3a3a"/></radialGradient>
<path d="M1238.0 628 A27.5 27.5 0 0 0 1210.5 600.5 L1210.5 615.5 A12.5 12.5 0 0 1 1223.0 628Z" fill="url(#bd8)"/>
<rect x="1223.0" y="628" width="15" height="39" fill="url(#pV)"/>
<rect x="1123" y="594" width="9" height="24" rx="2" fill="#6a6a6a"/><rect x="1188" y="594" width="9" height="24" rx="2" fill="#6a6a6a"/>
<rect x="1148" y="574" width="23" height="18" fill="#c4c4f4"/>
<path d="M1146 585 L1174 585 L1184 596 L1184 618 L1172 631 L1148 631 L1136 618 L1136 596Z" fill="#b8b8ee" stroke="#d0d0ff"/>
<circle cx="1160" cy="608" r="21" fill="#3a3a6a"/>
<circle cx="1160" cy="607" r="16" fill="#d8f4fc" stroke="#c0c0f8" stroke-width="1.5"/>
<path d="M1160 607 V591 A16 16 0 0 0 1144 607Z M1160 607 V623 A16 16 0 0 0 1176 607Z" fill="#b8c8d0"/>
<circle cx="1143" cy="593" r="2.5" fill="#c8c8c8"/>
<circle cx="1177" cy="593" r="2.5" fill="#c8c8c8"/>
<circle cx="1143" cy="621" r="2.5" fill="#c8c8c8"/>
<circle cx="1177" cy="621" r="2.5" fill="#c8c8c8"/>
<rect x="1123" y="654" width="9" height="24" rx="2" fill="#6a6a6a"/><rect x="1188" y="654" width="9" height="24" rx="2" fill="#6a6a6a"/>
<rect x="1148" y="634" width="23" height="18" fill="#c4c4f4"/>
<path d="M1146 645 L1174 645 L1184 656 L1184 678 L1172 691 L1148 691 L1136 678 L1136 656Z" fill="#b8b8ee" stroke="#d0d0ff"/>
<circle cx="1160" cy="668" r="21" fill="#3a3a6a"/>
<circle cx="1160" cy="667" r="16" fill="#d8f4fc" stroke="#c0c0f8" stroke-width="1.5"/>
<path d="M1160 667 V651 A16 16 0 0 0 1144 667Z M1160 667 V683 A16 16 0 0 0 1176 667Z" fill="#b8c8d0"/>
<circle cx="1143" cy="653" r="2.5" fill="#c8c8c8"/>
<circle cx="1177" cy="653" r="2.5" fill="#c8c8c8"/>
<circle cx="1143" cy="681" r="2.5" fill="#c8c8c8"/>
<circle cx="1177" cy="681" r="2.5" fill="#c8c8c8"/>
<rect x="1049.5" y="429" width="11" height="8" fill="url(#stemG)"/>
<rect x="1048" y="446" width="14" height="24" fill="url(#stemG)"/>
<rect x="1044.5" y="437" width="21" height="9" fill="url(#collG)"/>
<circle cx="1055" cy="406" r="22" fill="url(#gface)" stroke="#f2f2f2" stroke-width="2"/>
<circle cx="1055" cy="389" r="0.8" fill="#7080a0"/>
<circle cx="1041" cy="396" r="0.8" fill="#7080a0"/>
<circle cx="1069" cy="396" r="0.8" fill="#7080a0"/>
<circle cx="1041" cy="416" r="0.8" fill="#7080a0"/>
<circle cx="1069" cy="416" r="0.8" fill="#7080a0"/>
<circle cx="1055" cy="423" r="0.8" fill="#7080a0"/>
<path d="M1044.5 417 L1056 405 L1057.5 406.5Z" fill="#d02020"/>
<circle cx="1055" cy="406" r="3.2" fill="#ff3030"/>
<path d="M1056 403 L1060 400 L1062 403 L1058 407Z" fill="#ff4040"/>
<circle cx="1054.2" cy="405" r="1.2" fill="#ffb0b0"/>
<rect x="1123" y="781.5" width="154" height="15" fill="url(#pH)"/>
<rect x="1140.5" y="778.0" width="5" height="22" rx="1.2" fill="url(#flG)"/>
<circle cx="1143" cy="780.5" r="0.9" fill="#333"/><circle cx="1143" cy="797.5" r="0.9" fill="#333"/>
<rect x="1169.5" y="778.0" width="5" height="22" rx="1.2" fill="url(#flG)"/>
<circle cx="1172" cy="780.5" r="0.9" fill="#333"/><circle cx="1172" cy="797.5" r="0.9" fill="#333"/>
<circle cx="1158" cy="789" r="10.5" fill="url(#ball)"/>
<circle cx="1158" cy="789" r="10.5" fill="none" stroke="#c42a2a" stroke-width="1.9"/>
<path d="M1147.5 789H1168.5M1158 778.5V799.5" stroke="#c83030" stroke-width="1.6"/>
<circle cx="1158" cy="789" r="2.3" fill="#c83030"/>
<rect x="1200.5" y="778.0" width="5" height="22" rx="1.2" fill="url(#flG)"/>
<circle cx="1203" cy="780.5" r="0.9" fill="#333"/><circle cx="1203" cy="797.5" r="0.9" fill="#333"/>
<rect x="1224.5" y="778.0" width="5" height="22" rx="1.2" fill="url(#flG)"/>
<circle cx="1227" cy="780.5" r="0.9" fill="#333"/><circle cx="1227" cy="797.5" r="0.9" fill="#333"/>
<rect x="1205" y="783" width="20" height="12" fill="url(#pH)"/>
<circle cx="1215" cy="789" r="9" fill="url(#ball)"/>
<rect x="1213" y="775" width="4" height="6" fill="#c0c0c0"/>
<rect x="1211" y="765" width="8" height="10" fill="url(#greenV)"/>
<rect x="1026" y="880" width="8" height="53" fill="url(#pV)"/>
<rect x="1022" y="928" width="16" height="5" fill="#909090"/>
<rect x="1069" y="880" width="8" height="53" fill="url(#pV)"/>
<rect x="1065" y="928" width="16" height="5" fill="#909090"/>
<rect x="1111" y="880" width="8" height="53" fill="url(#pV)"/>
<rect x="1107" y="928" width="16" height="5" fill="#909090"/>
<path d="M1023 712 C1023 696 1050 691 1073 691 C1096 691 1123 696 1123 712 L1123 793 L1023 793Z" fill="url(#tankG)"/>
<rect x="1023" y="711" width="100" height="2" fill="#d0d0d0" opacity="0.6"/>
<path d="M1023 793 L1123 793 L1123 875 C1123 888 1096 893 1073 893 C1050 893 1023 888 1023 875Z" fill="url(#tankP)"/>
<rect x="1023" y="837" width="100" height="4" fill="#c8c8d8" opacity="0.8"/>
<rect x="1023" y="874" width="100" height="3" fill="#c8c8d8" opacity="0.8"/>
<rect x="1067" y="790" width="12" height="20" fill="url(#stemG)"/>
<rect x="1063" y="799" width="20" height="10" fill="url(#collG)"/>
<rect x="1065" y="809" width="16" height="40" fill="url(#stemG)"/>
<circle cx="1073" cy="854" r="11" fill="#c8c8c8" stroke="#e0e0e0"/>
<path d="M1065 825 L1081 825 L1081 852 A8 8 0 0 1 1065 852Z" fill="url(#pV)"/>
<circle cx="1073" cy="768" r="22" fill="url(#gface)" stroke="#f2f2f2" stroke-width="2"/>
<circle cx="1073" cy="751" r="0.8" fill="#7080a0"/>
<circle cx="1059" cy="758" r="0.8" fill="#7080a0"/>
<circle cx="1087" cy="758" r="0.8" fill="#7080a0"/>
<circle cx="1059" cy="778" r="0.8" fill="#7080a0"/>
<circle cx="1087" cy="778" r="0.8" fill="#7080a0"/>
<circle cx="1073" cy="785" r="0.8" fill="#7080a0"/>
<path d="M1062.5 779 L1074 767 L1075.5 768.5Z" fill="#d02020"/>
<circle cx="1073" cy="768" r="3.2" fill="#ff3030"/>
<path d="M1074 765 L1078 762 L1080 765 L1076 769Z" fill="#ff4040"/>
<circle cx="1072.2" cy="767" r="1.2" fill="#ffb0b0"/>
<rect x="673.5" y="345.5" width="69" height="29" fill="#00ffff" stroke="#8a8a8a" stroke-width="1"/>
<text x="736" y="365.0" text-anchor="end" font-family="Liberation Sans" font-weight="bold" font-size="14.5" fill="#000">0.0 %</text>
<rect x="778.5" y="345.5" width="69" height="29" fill="#00ffff" stroke="#8a8a8a" stroke-width="1"/>
<text x="841" y="365.0" text-anchor="end" font-family="Liberation Sans" font-weight="bold" font-size="14.5" fill="#000">0.0 °C</text>
<rect x="1020.5" y="345.5" width="69" height="29" fill="#00ffff" stroke="#8a8a8a" stroke-width="1"/>
<text x="1083" y="365.0" text-anchor="end" font-family="Liberation Sans" font-weight="bold" font-size="14.5" fill="#000">0.0 °C</text>
<rect x="417.5" y="432.5" width="69" height="29" fill="#00ffff" stroke="#8a8a8a" stroke-width="1"/>
<text x="480" y="452.0" text-anchor="end" font-family="Liberation Sans" font-weight="bold" font-size="14.5" fill="#000">0.00 bar</text>
<rect x="512.5" y="432.5" width="69" height="29" fill="#00ffff" stroke="#8a8a8a" stroke-width="1"/>
<text x="575" y="452.0" text-anchor="end" font-family="Liberation Sans" font-weight="bold" font-size="14.5" fill="#000">0 µS</text>
<rect x="464.5" y="537.5" width="69" height="29" fill="#00ffff" stroke="#8a8a8a" stroke-width="1"/>
<text x="527" y="557.0" text-anchor="end" font-family="Liberation Sans" font-weight="bold" font-size="14.5" fill="#000">0.0 %</text>
<rect x="263.5" y="597.5" width="151" height="29" fill="#00ffff" stroke="#8a8a8a" stroke-width="1"/>
<text x="339.0" y="617.0" text-anchor="middle" font-family="Liberation Sans" font-weight="bold" font-size="14.5" fill="#000">0 m3/h</text>
<rect x="345.5" y="627.5" width="69" height="29" fill="#00ffff" stroke="#8a8a8a" stroke-width="1"/>
<text x="408" y="647.0" text-anchor="end" font-family="Liberation Sans" font-weight="bold" font-size="14.5" fill="#000">0 %</text>
<rect x="345.5" y="657.5" width="69" height="29" fill="#00ffff" stroke="#8a8a8a" stroke-width="1"/>
<text x="408" y="677.0" text-anchor="end" font-family="Liberation Sans" font-weight="bold" font-size="14.5" fill="#000">0 kW</text>
<rect x="853.5" y="627.5" width="69" height="29" fill="#00ffff" stroke="#8a8a8a" stroke-width="1"/>
<text x="916" y="647.0" text-anchor="end" font-family="Liberation Sans" font-weight="bold" font-size="14.5" fill="#000">0.0 %</text>
<rect x="853.5" y="657.5" width="69" height="29" fill="#00ffff" stroke="#8a8a8a" stroke-width="1"/>
<text x="916" y="677.0" text-anchor="end" font-family="Liberation Sans" font-weight="bold" font-size="14.5" fill="#000">0 kg/h</text>
<rect x="1063.5" y="503.5" width="69" height="29" fill="#00ffff" stroke="#8a8a8a" stroke-width="1"/>
<text x="1126" y="523.0" text-anchor="end" font-family="Liberation Sans" font-weight="bold" font-size="14.5" fill="#000">0.0 %</text>
<rect x="1063.5" y="533.5" width="69" height="29" fill="#00ffff" stroke="#8a8a8a" stroke-width="1"/>
<text x="1126" y="553.0" text-anchor="end" font-family="Liberation Sans" font-weight="bold" font-size="14.5" fill="#000">0 l/h</text>
<rect x="1038.5" y="707.5" width="69" height="29" fill="#00ffff" stroke="#8a8a8a" stroke-width="1"/>
<text x="1101" y="727.0" text-anchor="end" font-family="Liberation Sans" font-weight="bold" font-size="14.5" fill="#000">0.0 °C</text>
<rect x="404.5" y="566.5" width="13" height="13" fill="none" stroke="#0000ff" stroke-width="2"/><path d="M418 573H425" stroke="#0000ff" stroke-width="1.5"/>
<rect x="916.5" y="722.5" width="13" height="13" fill="none" stroke="#0000ff" stroke-width="2"/><path d="M905 729H916" stroke="#0000ff" stroke-width="1.5"/>
<rect x="916.5" y="750.5" width="13" height="13" fill="none" stroke="#0000ff" stroke-width="2"/><path d="M905 757H916" stroke="#0000ff" stroke-width="1.5"/>
</svg>
</div>
<!-- RIGHT PANEL -->

<!-- canvas vscroll -->
<div class="a" style="left:1277px;top:167px;width:17px;height:766px;background:linear-gradient(90deg,#d4d4d4,#e4e4e4)"></div>
<div class="a" style="left:1277px;top:168px;width:16px;height:19px;background:linear-gradient(90deg,#fafafa,#e6e6e6);border:1px solid #d4d4d4"></div>
<svg class="a" style="left:1281px;top:174px" width="10" height="8"><path d="M1 6 L5 2 L9 6Z" fill="#bbb"/></svg>
<div class="a" style="left:1277px;top:188px;width:16px;height:260px;background:linear-gradient(90deg,#f8f8f8,#e8e8e8 70%,#d8d8d8);border:1px solid #d0d0d0"></div>
<svg class="a" style="left:1280px;top:310px" width="10" height="8"><path d="M1 1H9M1 3.5H9M1 6H9" stroke="#888"/></svg>
<div class="a" style="left:1277px;top:917px;width:16px;height:16px;background:linear-gradient(90deg,#fafafa,#e4e4e4);border:1px solid #d4d4d4"></div>
<svg class="a" style="left:1281px;top:922px" width="10" height="8"><path d="M1 2 L5 6 L9 2Z" fill="#000"/></svg>
<!-- canvas hscroll -->
<div class="a" style="left:253px;top:933px;width:1024px;height:17px;background:linear-gradient(#d8d8d8,#e8e8e8)"></div>
<div class="a" style="left:254px;top:934px;width:15px;height:16px;background:linear-gradient(#fafafa,#e4e4e4);border:1px solid #d4d4d4"></div>
<svg class="a" style="left:258px;top:937px" width="8" height="10"><path d="M6 1 L2 5 L6 9Z" fill="#bbb"/></svg>
<div class="a" style="left:270px;top:934px;width:256px;height:16px;background:linear-gradient(#f8f8f8,#e0e0e0);border:1px solid #d0d0d0"></div>
<svg class="a" style="left:393px;top:937px" width="10" height="10"><path d="M1 1V9M3.5 1V9M6 1V9M8.5 1V9" stroke="#888"/></svg>
<div class="a" style="left:1261px;top:934px;width:15px;height:16px;background:linear-gradient(#fafafa,#e4e4e4);border:1px solid #d4d4d4"></div>
<svg class="a" style="left:1265px;top:937px" width="8" height="10"><path d="M2 1 L6 5 L2 9Z" fill="#000"/></svg>
<!-- splitter -->
<div class="a" style="left:1293px;top:167px;width:7px;height:783px;background:linear-gradient(90deg,#c8c8c8,#f4f4f4 50%,#dcdcdc)"></div>
<svg class="a" style="left:1295px;top:554px" width="3" height="12"><path d="M1 1H2M1 4H2M1 7H2M1 10H2" stroke="#666"/></svg>
<!-- right panel upper header -->
<div class="a" style="left:1300px;top:167px;width:179px;height:26px;background:#e8e8e8"></div>
<div class="a" style="left:1302px;top:169px;width:21px;height:21px;background:linear-gradient(#eaf6fb,#cfe5ef);border:1px solid #a8b8c0"></div>
<svg class="a" style="left:1304px;top:172px" width="17" height="16" viewBox="0 0 17 16"><path d="M2 3 V13 H8 M2 8 H8" stroke="#888" fill="none"/><rect x="0" y="1" width="4" height="3" fill="#999"/><rect x="4" y="0" width="7" height="5" fill="#f0d060" stroke="#b09030" stroke-width="0.5"/><rect x="8" y="6" width="8" height="4" fill="#f0d060" stroke="#b09030" stroke-width="0.5"/><rect x="8" y="11" width="8" height="4" fill="#f0d060" stroke="#b09030" stroke-width="0.5"/></svg>
<svg class="a" style="left:1331px;top:171px" width="12" height="16"><use href="#pin"/></svg>
<div class="a" style="left:1350px;top:171px;width:126px;height:18px;background:#fff;border:1px solid #d4d4d4"></div>
<div class="t" style="left:1353px;top:173px">gl_gauge</div>
<div class="a" style="left:1461px;top:172px;width:14px;height:16px;background:linear-gradient(#fafafa,#dcdcdc);border:1px solid #c4c4c4"></div>
<svg class="a" style="left:1464px;top:177px" width="9" height="6"><path d="M0 0 L9 0 L4.5 5Z" fill="#000"/></svg>
<!-- upper list -->
<div class="a" style="left:1300px;top:193px;width:162px;height:321px;background:#fff;overflow:hidden">
<div class="a" style="left:6px;top:11px;width:9px;height:9px;border:1px solid #888;background:#fff"></div><svg class="a" style="left:8px;top:13px" width="5" height="5"><path d="M0 2.5H5M2.5 0V5" stroke="#000"/></svg><div class="a" style="left:15px;top:15px;width:4px;height:1px;background:#999"></div><svg class="a" style="left:19px;top:8px" width="20" height="16"><use href="#folder"/></svg><div class="t n" style="left:43px;top:9px">Animace</div><div class="a" style="left:6px;top:32px;width:9px;height:9px;border:1px solid #888;background:#fff"></div><svg class="a" style="left:8px;top:34px" width="5" height="5"><path d="M0 2.5H5M2.5 0V5" stroke="#000"/></svg><div class="a" style="left:15px;top:36px;width:4px;height:1px;background:#999"></div><svg class="a" style="left:19px;top:29px" width="20" height="16"><use href="#folder"/></svg><div class="t n" style="left:43px;top:30px">Barvy</div><div class="a" style="left:6px;top:53px;width:9px;height:9px;border:1px solid #888;background:#fff"></div><svg class="a" style="left:8px;top:55px" width="5" height="5"><path d="M0 2.5H5M2.5 0V5" stroke="#000"/></svg><div class="a" style="left:15px;top:57px;width:4px;height:1px;background:#999"></div><svg class="a" style="left:19px;top:50px" width="20" height="16"><use href="#folder"/></svg><div class="t n" style="left:43px;top:51px">Blikání</div><div class="a" style="left:6px;top:74px;width:9px;height:9px;border:1px solid #888;background:#fff"></div><svg class="a" style="left:8px;top:76px" width="5" height="5"><path d="M0 2.5H5M2.5 0V5" stroke="#000"/></svg><div class="a" style="left:15px;top:78px;width:4px;height:1px;background:#999"></div><svg class="a" style="left:19px;top:71px" width="20" height="16"><use href="#folder"/></svg><div class="t n" style="left:43px;top:72px">Hraniční krychle</div><div class="a" style="left:6px;top:95px;width:9px;height:9px;border:1px solid #888;background:#fff"></div><svg class="a" style="left:8px;top:97px" width="5" height="5"><path d="M0 2.5H5M2.5 0V5" stroke="#000"/></svg><div class="a" style="left:15px;top:99px;width:4px;height:1px;background:#999"></div><svg class="a" style="left:19px;top:92px" width="20" height="16"><use href="#folder"/></svg><div class="t n" style="left:43px;top:93px">Identifikátory skupin</div><div class="a" style="left:6px;top:116px;width:9px;height:9px;border:1px solid #888;background:#fff"></div><svg class="a" style="left:8px;top:118px" width="5" height="5"><path d="M0 2.5H5M2.5 0V5" stroke="#000"/></svg><div class="a" style="left:15px;top:120px;width:4px;height:1px;background:#999"></div><svg class="a" style="left:19px;top:113px" width="20" height="16"><use href="#folder"/></svg><div class="t n" style="left:43px;top:114px">Informace</div><div class="a" style="left:6px;top:137px;width:9px;height:9px;border:1px solid #888;background:#fff"></div><svg class="a" style="left:8px;top:139px" width="5" height="5"><path d="M0 2.5H5M2.5 0V5" stroke="#000"/></svg><div class="a" style="left:15px;top:141px;width:4px;height:1px;background:#999"></div><svg class="a" style="left:19px;top:134px" width="20" height="16"><use href="#folder"/></svg><div class="t n" style="left:43px;top:135px">Materiály</div><div class="a" style="left:6px;top:158px;width:9px;height:9px;border:1px solid #888;background:#fff"></div><svg class="a" style="left:8px;top:160px" width="5" height="5"><path d="M0 2.5H5M2.5 0V5" stroke="#000"/></svg><div class="a" style="left:15px;top:162px;width:4px;height:1px;background:#999"></div><svg class="a" style="left:19px;top:155px" width="20" height="16"><use href="#folder"/></svg><div class="t n" style="left:43px;top:156px">Okno a pozice</div><div class="a" style="left:6px;top:179px;width:9px;height:9px;border:1px solid #888;background:#fff"></div><svg class="a" style="left:8px;top:181px" width="5" height="5"><path d="M0 2.5H5M2.5 0V5" stroke="#000"/></svg><div class="a" style="left:15px;top:183px;width:4px;height:1px;background:#999"></div><svg class="a" style="left:19px;top:176px" width="20" height="16"><use href="#folder"/></svg><div class="t n" style="left:43px;top:177px">Osvětlení</div><div class="a" style="left:6px;top:200px;width:9px;height:9px;border:1px solid #888;background:#fff"></div><svg class="a" style="left:8px;top:202px" width="5" height="5"><path d="M0 2.5H5M2.5 0V5" stroke="#000"/></svg><div class="a" style="left:15px;top:204px;width:4px;height:1px;background:#999"></div><svg class="a" style="left:19px;top:197px" width="20" height="16"><use href="#folder"/></svg><div class="t n" style="left:43px;top:198px">Prostor a transformace</div><div class="a" style="left:6px;top:221px;width:9px;height:9px;border:1px solid #888;background:#fff"></div><svg class="a" style="left:8px;top:223px" width="5" height="5"><path d="M0 2.5H5M2.5 0V5" stroke="#000"/></svg><div class="a" style="left:15px;top:225px;width:4px;height:1px;background:#999"></div><svg class="a" style="left:19px;top:218px" width="20" height="16"><use href="#folder"/></svg><div class="t n" style="left:43px;top:219px">Stíny</div><div class="a" style="left:6px;top:242px;width:9px;height:9px;border:1px solid #888;background:#fff"></div><svg class="a" style="left:8px;top:244px" width="5" height="5"><path d="M0 2.5H5M2.5 0V5" stroke="#000"/></svg><div class="a" style="left:15px;top:246px;width:4px;height:1px;background:#999"></div><svg class="a" style="left:19px;top:239px" width="20" height="16"><use href="#folder"/></svg><div class="t n" style="left:43px;top:240px">Struktura skupin</div><div class="a" style="left:6px;top:263px;width:9px;height:9px;border:1px solid #888;background:#fff"></div><svg class="a" style="left:8px;top:265px" width="5" height="5"><path d="M0 2.5H5M2.5 0V5" stroke="#000"/></svg><div class="a" style="left:15px;top:267px;width:4px;height:1px;background:#999"></div><svg class="a" style="left:19px;top:260px" width="20" height="16"><use href="#folder"/></svg><div class="t n" style="left:43px;top:261px">Texturování</div><div class="a" style="left:6px;top:284px;width:9px;height:9px;border:1px solid #888;background:#fff"></div><svg class="a" style="left:8px;top:286px" width="5" height="5"><path d="M0 2.5H5M2.5 0V5" stroke="#000"/></svg><div class="a" style="left:15px;top:288px;width:4px;height:1px;background:#999"></div><svg class="a" style="left:19px;top:281px" width="20" height="16"><use href="#folder"/></svg><div class="t n" style="left:43px;top:282px">Viditelnost</div><div class="a" style="left:6px;top:305px;width:9px;height:9px;border:1px solid #888;background:#fff"></div><svg class="a" style="left:8px;top:307px" width="5" height="5"><path d="M0 2.5H5M2.5 0V5" stroke="#000"/></svg><div class="a" style="left:15px;top:309px;width:4px;height:1px;background:#999"></div><svg class="a" style="left:19px;top:302px" width="20" height="16"><use href="#folder"/></svg><div class="t n" style="left:43px;top:303px">Vykreslování</div></div>
<div class="a" style="left:1462px;top:193px;width:17px;height:321px;background:linear-gradient(90deg,#d8d8d8,#e6e6e6)"></div>
<div class="a" style="left:1462px;top:195px;width:16px;height:16px;background:linear-gradient(90deg,#fafafa,#e4e4e4);border:1px solid #d8d8d8"></div>
<svg class="a" style="left:1465px;top:200px" width="10" height="8"><path d="M1 6 L5 2 L9 6Z" fill="#bbb"/></svg>
<div class="a" style="left:1462px;top:211px;width:16px;height:144px;background:linear-gradient(90deg,#f8f8f8,#e8e8e8 70%,#d8d8d8);border:1px solid #d0d0d0"></div>
<svg class="a" style="left:1465px;top:278px" width="10" height="8"><path d="M1 1H9M1 3.5H9M1 6H9" stroke="#888"/></svg>
<div class="a" style="left:1462px;top:497px;width:16px;height:16px;background:linear-gradient(90deg,#fafafa,#e4e4e4);border:1px solid #d8d8d8"></div>
<svg class="a" style="left:1465px;top:502px" width="10" height="8"><path d="M1 2 L5 6 L9 2Z" fill="#000"/></svg>
<div class="a" style="left:1300px;top:514px;width:162px;height:17px;background:linear-gradient(#d8d8d8,#e8e8e8)"></div>
<div class="a" style="left:1301px;top:515px;width:15px;height:16px;background:linear-gradient(#fafafa,#e4e4e4);border:1px solid #d8d8d8"></div>
<svg class="a" style="left:1305px;top:518px" width="8" height="10"><path d="M6 1 L2 5 L6 9Z" fill="#bbb"/></svg>
<div class="a" style="left:1318px;top:515px;width:48px;height:16px;background:linear-gradient(#f8f8f8,#e0e0e0);border:1px solid #d0d0d0"></div>
<svg class="a" style="left:1336px;top:518px" width="10" height="10"><path d="M1 1V9M3.5 1V9M6 1V9M8.5 1V9" stroke="#888"/></svg>
<div class="a" style="left:1446px;top:515px;width:15px;height:16px;background:linear-gradient(#fafafa,#e4e4e4);border:1px solid #d8d8d8"></div>
<svg class="a" style="left:1450px;top:518px" width="8" height="10"><path d="M2 1 L6 5 L2 9Z" fill="#000"/></svg>
<div class="a" style="left:1300px;top:531px;width:179px;height:6px;background:linear-gradient(#f0f0f0,#d8d8d8);border-bottom:1px solid #a8a8a8"></div>
<svg class="a" style="left:1384px;top:532px" width="12" height="3"><path d="M1 1V2M4 1V2M7 1V2M10 1V2" stroke="#666"/></svg>
<!-- lower header -->
<div class="a" style="left:1300px;top:537px;width:179px;height:26px;background:#e8e8e8"></div>
<svg class="a" style="left:1307px;top:542px" width="12" height="16"><use href="#pin"/></svg>
<div class="a" style="left:1326px;top:541px;width:151px;height:18px;background:#fff;border:1px solid #d4d4d4"></div>
<div class="t" style="left:1328px;top:543px">gl_gauge</div>
<div class="a" style="left:1463px;top:542px;width:13px;height:16px;background:linear-gradient(#fafafa,#dcdcdc);border:1px solid #c4c4c4"></div>
<svg class="a" style="left:1465px;top:547px" width="9" height="6"><path d="M0 0 L9 0 L4.5 5Z" fill="#000"/></svg>
<!-- lower list -->
<div class="a" style="left:1300px;top:563px;width:162px;height:370px;background:#fff;overflow:hidden">
<svg class="a" style="left:10px;top:7px" width="18" height="18"><use href="#evt"/></svg><div class="t n" style="left:32px;top:9px">On3DMouseClick( Instrume</div><svg class="a" style="left:10px;top:28px" width="18" height="18"><use href="#evt"/></svg><div class="t n" style="left:32px;top:30px">On3DMouseDown( Instrum</div><svg class="a" style="left:10px;top:49px" width="18" height="18"><use href="#evt"/></svg><div class="t n" style="left:32px;top:51px">OnAccessDenied()</div><svg class="a" style="left:10px;top:70px" width="18" height="18"><use href="#evt"/></svg><div class="t n" style="left:32px;top:72px">OnActivate()</div><svg class="a" style="left:10px;top:91px" width="18" height="18"><use href="#evt"/></svg><div class="t n" style="left:32px;top:93px">OnAnimationTimer()</div><svg class="a" style="left:10px;top:112px" width="18" height="18"><use href="#evt"/></svg><div class="t n" style="left:32px;top:114px">OnCommand( Command : lo</div><svg class="a" style="left:10px;top:133px" width="18" height="18"><use href="#evt"/></svg><div class="t n" style="left:32px;top:135px">OnDeselect()</div><svg class="a" style="left:10px;top:154px" width="18" height="18"><use href="#evt"/></svg><div class="t n" style="left:32px;top:156px">OnHide()</div><svg class="a" style="left:10px;top:175px" width="18" height="18"><use href="#evt"/></svg><div class="t n" style="left:32px;top:177px">OnKeyDown( Character : lo</div><svg class="a" style="left:10px;top:196px" width="18" height="18"><use href="#evt"/></svg><div class="t n" style="left:32px;top:198px">OnKeyRepeat( Character :</div><svg class="a" style="left:10px;top:217px" width="18" height="18"><use href="#evt"/></svg><div class="t n" style="left:32px;top:219px">OnKeyUp( Character : long</div><svg class="a" style="left:10px;top:238px" width="18" height="18"><use href="#evt"/></svg><div class="t n" style="left:32px;top:240px">OnLanguageChanged( Lang</div><svg class="a" style="left:10px;top:259px" width="18" height="18"><use href="#evt"/></svg><div class="t n" style="left:32px;top:261px">OnMouseClick( LeftButton,</div><svg class="a" style="left:10px;top:280px" width="18" height="18"><use href="#evt"/></svg><div class="t n" style="left:32px;top:282px">OnMouseDoubleClick( Mous</div><svg class="a" style="left:10px;top:301px" width="18" height="18"><use href="#evt"/></svg><div class="t n" style="left:32px;top:303px">OnMouseDown( MouseX, M</div><svg class="a" style="left:10px;top:322px" width="18" height="18"><use href="#evt"/></svg><div class="t n" style="left:32px;top:324px">OnMouseMove( MouseX, M</div><svg class="a" style="left:10px;top:343px" width="18" height="18"><use href="#evt"/></svg><div class="t n" style="left:32px;top:345px">OnMouseUp( MouseX, Mou</div><svg class="a" style="left:10px;top:364px" width="18" height="18"><use href="#evt"/></svg><div class="t n" style="left:32px;top:366px">OnMouseWheel( WheelS</div></div>
<div class="a" style="left:1462px;top:563px;width:17px;height:370px;background:linear-gradient(90deg,#d8d8d8,#e6e6e6)"></div>
<div class="a" style="left:1462px;top:564px;width:16px;height:16px;background:linear-gradient(90deg,#fafafa,#e4e4e4);border:1px solid #d8d8d8"></div>
<svg class="a" style="left:1465px;top:569px" width="10" height="8"><path d="M1 6 L5 2 L9 6Z" fill="#bbb"/></svg>
<div class="a" style="left:1462px;top:580px;width:16px;height:213px;background:linear-gradient(90deg,#f8f8f8,#e8e8e8 70%,#d8d8d8);border:1px solid #d0d0d0"></div>
<svg class="a" style="left:1465px;top:683px" width="10" height="8"><path d="M1 1H9M1 3.5H9M1 6H9" stroke="#888"/></svg>
<div class="a" style="left:1462px;top:917px;width:16px;height:16px;background:linear-gradient(90deg,#fafafa,#e4e4e4);border:1px solid #d8d8d8"></div>
<svg class="a" style="left:1465px;top:922px" width="10" height="8"><path d="M1 2 L5 6 L9 2Z" fill="#000"/></svg>
<div class="a" style="left:1300px;top:933px;width:162px;height:17px;background:linear-gradient(#d8d8d8,#e8e8e8)"></div>
<div class="a" style="left:1301px;top:934px;width:15px;height:16px;background:linear-gradient(#fafafa,#e4e4e4);border:1px solid #d8d8d8"></div>
<svg class="a" style="left:1305px;top:937px" width="8" height="10"><path d="M6 1 L2 5 L6 9Z" fill="#bbb"/></svg>
<div class="a" style="left:1318px;top:934px;width:38px;height:16px;background:linear-gradient(#f8f8f8,#e0e0e0);border:1px solid #d0d0d0"></div>
<svg class="a" style="left:1332px;top:937px" width="10" height="10"><path d="M1 1V9M3.5 1V9M6 1V9M8.5 1V9" stroke="#888"/></svg>
<div class="a" style="left:1446px;top:934px;width:15px;height:16px;background:linear-gradient(#fafafa,#e4e4e4);border:1px solid #d8d8d8"></div>
<svg class="a" style="left:1450px;top:937px" width="8" height="10"><path d="M2 1 L6 5 L2 9Z" fill="#000"/></svg>
<!-- right tab strip -->
<div class="a" style="left:1479px;top:167px;width:22px;height:783px;background:#e6e6e6"></div>
<div class="a" style="left:1481px;top:170px;width:19px;height:93px;background:linear-gradient(90deg,#f4fbfe,#cfe6ef);border:1px solid #c0d0d8"></div>
<div class="t" style="left:1496px;top:174px;transform:rotate(90deg);transform-origin:0 0">Nativní procedury</div>
<div class="a" style="left:1481px;top:268px;width:19px;height:73px;background:linear-gradient(90deg,#f0f0f0,#d4d4d4);border:1px solid #c0c0c0"></div>
<div class="t" style="left:1496px;top:273px;transform:rotate(90deg);transform-origin:0 0">Zarovnávání</div>
<div class="a" style="left:1481px;top:540px;width:19px;height:108px;background:linear-gradient(90deg,#f4fbfe,#cfe6ef);border:1px solid #c0d0d8"></div>
<div class="t" style="left:1496px;top:544px;transform:rotate(90deg);transform-origin:0 0">Událostní procedury</div>
<svg class="a" style="left:1486px;top:933px" width="12" height="18"><path d="M2 1 L10 9 L2 17" stroke="#999" fill="none" stroke-width="1.2"/></svg>

<!-- STATUS -->

<div class="a" style="left:1px;top:950px;width:1500px;height:25px;background:#e8e8e8;border-top:1px solid #d8d8d8"></div>
<div class="a" style="left:3px;top:953px;width:195px;height:21px;border:1px solid #d0d0d0;border-left:none;border-top:none"></div>
<div class="a" style="left:201px;top:953px;width:297px;height:21px;border-right:1px solid #d0d0d0"></div>
<div class="a" style="left:500px;top:953px;width:139px;height:21px;border-right:1px solid #d0d0d0"></div>
<div class="a" style="left:640px;top:953px;width:195px;height:21px;border-right:1px solid #d0d0d0"></div>
<div class="a" style="left:837px;top:953px;width:645px;height:21px;border:1px solid #d0d0d0;border-left:1px solid #c8c8c8;background:#ebebeb"></div>
<div class="t n" style="left:841px;top:957px;letter-spacing:-0.18px">H:\CW_APP\Zákazníci\Lazar\Centralni Kotelna\CW_ENG_plyn_centrální kotelna\eng_centrálníkotelna.cw</div>
<svg class="a" style="left:1487px;top:961px" width="13" height="13"><path d="M12 1 L1 12 M12 5 L5 12 M12 9 L9 12" stroke="#b0b0b0"/></svg>

</body></html>
